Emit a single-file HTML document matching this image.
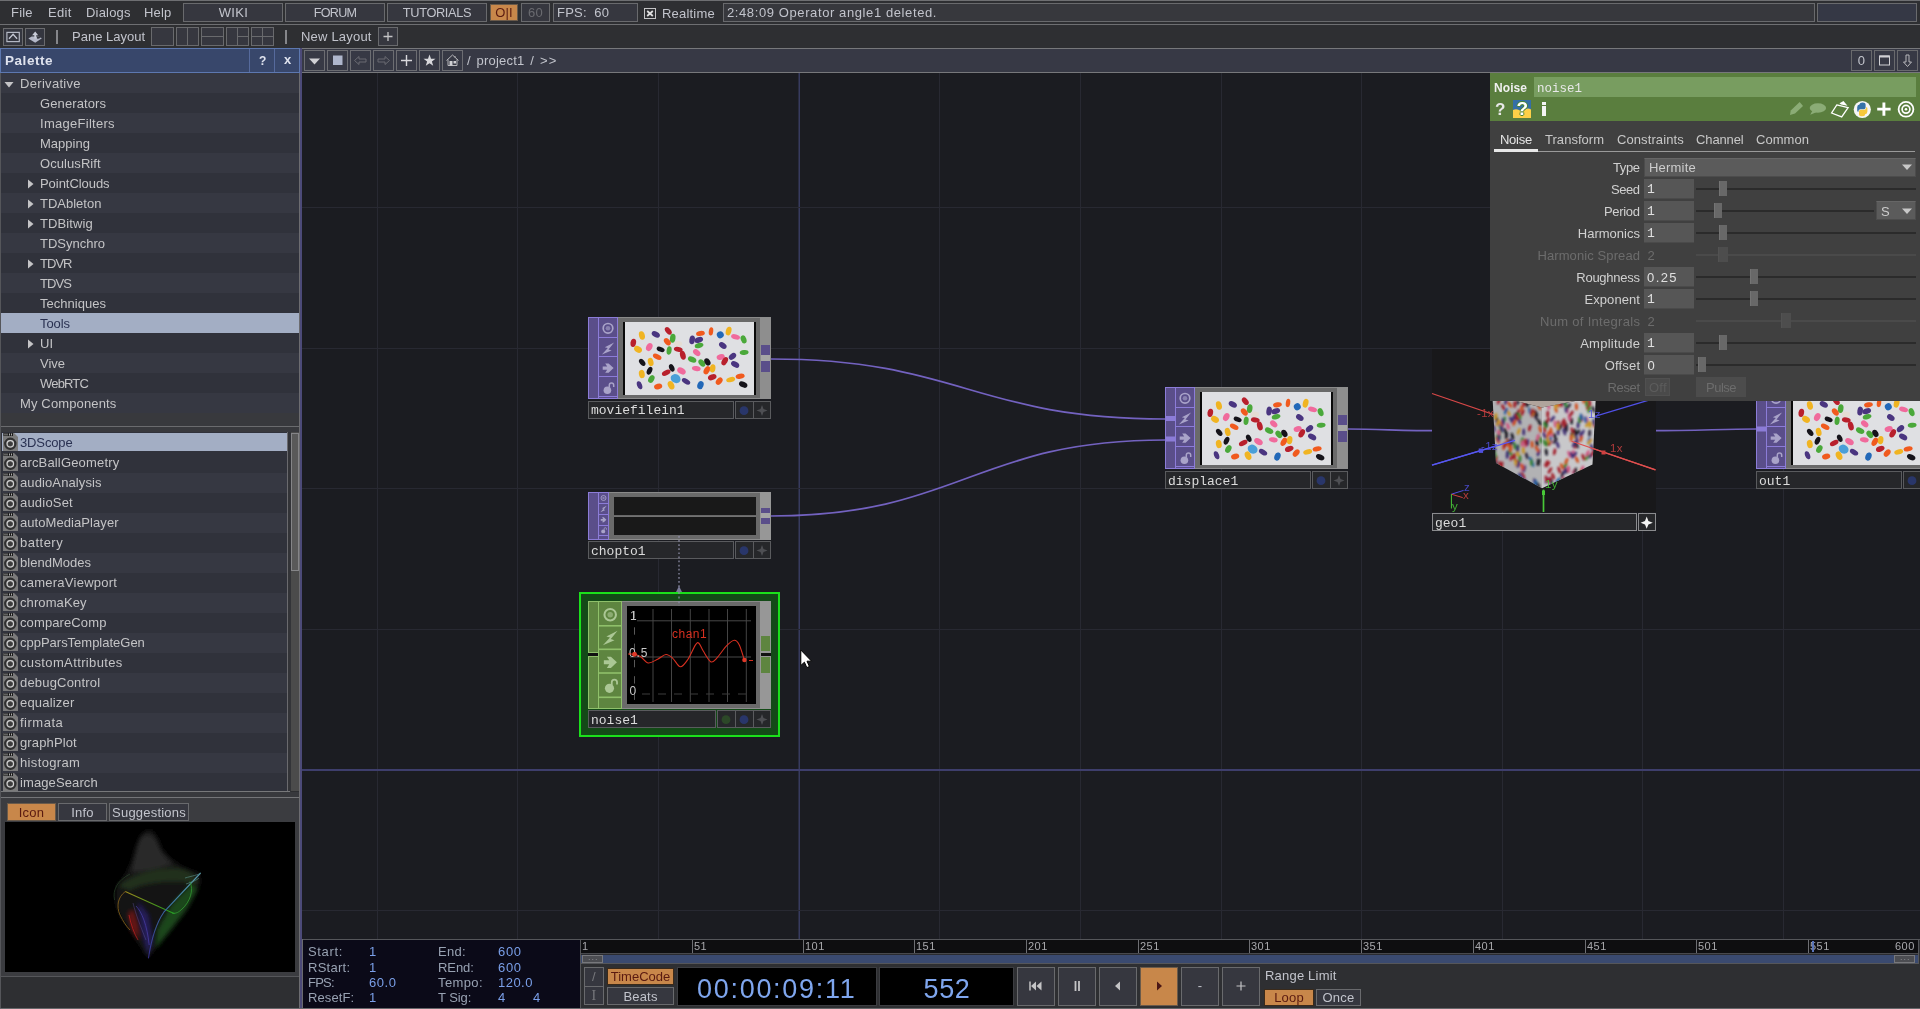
<!DOCTYPE html>
<html><head><meta charset="utf-8"><title>TouchDesigner</title>
<style>
*{box-sizing:border-box;margin:0;padding:0}
html,body{width:1920px;height:1009px;overflow:hidden;background:#2e2f32}
body{position:relative;font-family:"Liberation Sans",sans-serif;font-size:13px;letter-spacing:.2px;color:#c2c4cc;line-height:1}
.a{position:absolute}
.t{position:absolute;white-space:nowrap;line-height:16px;height:16px}
.mono{font-family:"Liberation Mono",monospace;letter-spacing:0}
.btn{position:absolute;background:#36373f;border:1px solid #696a6d;text-align:center;white-space:nowrap}
.org{background:#c8874a;color:#4a1616;border-color:#6a5a4a}
svg{position:absolute;overflow:visible}
#root{position:absolute;left:0;top:0;width:1920px;height:1009px;will-change:transform;overflow:hidden}
</style></head><body><div id="root">
<!-- ===== top menu row ===== -->
<div class="a" style="left:0;top:0;width:1920px;height:1px;background:#6e6f72"></div>
<div class="a" style="left:0;top:1px;width:1920px;height:23px;background:#2e2f32"></div>
<div class="a" style="left:0;top:24px;width:1920px;height:1px;background:#6e6f72"></div>
<div class="a" style="left:0;top:25px;width:1920px;height:23px;background:#2e2f32"></div>
<div class="t" style="left:11px;top:5px">File</div>
<div class="t" style="left:48px;top:5px;letter-spacing:.3px">Edit</div>
<div class="t" style="left:86px;top:5px">Dialogs</div>
<div class="t" style="left:144px;top:5px">Help</div>
<div class="btn" style="left:183px;top:3px;width:100px;height:19px;line-height:17px;letter-spacing:.38px;padding-left:1px">WIKI</div>
<div class="btn" style="left:285px;top:3px;width:100px;height:19px;line-height:18.5px;font-size:12.6px;letter-spacing:-0.72px">FORUM</div>
<div class="btn" style="left:387px;top:3px;width:100px;height:19px;line-height:17.5px;font-size:12.8px;letter-spacing:-0.36px">TUTORIALS</div>
<div class="btn org" style="left:490px;top:4px;width:28px;height:17px;line-height:15px;color:#5a1a10">O|I</div>
<div class="btn" style="left:521px;top:3px;width:29px;height:19px;line-height:17px;color:#6a6b70">60</div>
<div class="btn" style="left:553px;top:3px;width:85px;height:19px;line-height:17px;text-align:left;padding-left:3px">FPS:&nbsp; 60</div>
<div class="a" style="left:644px;top:8px;width:12px;height:11px;border:1px solid #c4c4c6;background:#2e2f32"></div>
<svg style="left:644px;top:8px" width="12" height="11"><path d="M3.2 3 L8.8 8 M8.8 3 L3.2 8" stroke="#e0e0e0" stroke-width="1.7"/></svg>
<div class="t" style="left:662px;top:6px">Realtime</div>
<div class="btn" style="left:723px;top:3px;width:1092px;height:19px;line-height:17px;text-align:left;padding-left:3px;background:#37383d"><span style="letter-spacing:.6px">2:48:09 Operator angle1 deleted.</span></div>
<div class="btn" style="left:1817px;top:3px;width:100px;height:19px;background:#353845"></div>
<!-- ===== second row ===== -->
<div class="btn" style="left:3px;top:28px;width:20px;height:18px;background:#34363f"></div>
<svg style="left:3px;top:28px" width="20" height="18"><rect x="3.9" y="4.4" width="12.4" height="9.2" fill="none" stroke="#b4b8c4" stroke-width="1.2"/><path d="M6 10.8 L10.1 6.3 L14.1 10.7" fill="none" stroke="#c4c8d4" stroke-width="1.3"/></svg>
<div class="btn" style="left:25px;top:28px;width:20px;height:18px;background:#34363f"></div>
<svg style="left:25px;top:28px" width="20" height="18"><path d="M3.3 10.4 L6.7 8.6 H13.7 L16.9 10.2 L10.2 14.8 Z" fill="#b4b8c8"/><path d="M11.5 8.6 H13.7 L16 9.8 L12.5 11 Z" fill="#34363f"/><path d="M10.2 3.6 L13.2 7.3 L11.2 7.3 L11.2 10.4 L9.3 10.4 L9.3 7.3 L7.1 7.3 Z" fill="#c8ccd8"/></svg>
<div class="a" style="left:56px;top:30px;width:2px;height:14px;background:#85868a"></div>
<div class="t" style="left:72px;top:29px;letter-spacing:0">Pane Layout</div>
<div class="btn" style="left:151px;top:27px;width:23px;height:19px"></div>
<div class="btn" style="left:176px;top:27px;width:23px;height:19px"></div><div class="a" style="left:187px;top:28px;width:1px;height:17px;background:#696a6d"></div>
<div class="btn" style="left:201px;top:27px;width:23px;height:19px"></div><div class="a" style="left:202px;top:36px;width:21px;height:1px;background:#696a6d"></div>
<div class="btn" style="left:226px;top:27px;width:23px;height:19px"></div><div class="a" style="left:237px;top:28px;width:1px;height:17px;background:#696a6d"></div><div class="a" style="left:238px;top:36px;width:10px;height:1px;background:#696a6d"></div>
<div class="btn" style="left:251px;top:27px;width:23px;height:19px"></div><div class="a" style="left:262px;top:28px;width:1px;height:17px;background:#696a6d"></div><div class="a" style="left:252px;top:36px;width:21px;height:1px;background:#696a6d"></div>
<div class="a" style="left:285px;top:30px;width:2px;height:14px;background:#85868a"></div>
<div class="t" style="left:301px;top:29px">New Layout</div>
<div class="btn" style="left:378px;top:27px;width:20px;height:19px"></div>
<svg style="left:378px;top:27px" width="20" height="19"><path d="M10 5 V14 M5.5 9.5 H14.5" stroke="#c4c4c6" stroke-width="1.3"/></svg>
<!-- ===== Palette panel ===== -->
<div class="a" style="left:0;top:48px;width:300px;height:25px;background:#38476b;border:1px solid #5d78b0"></div>
<div class="a" style="left:249px;top:49px;width:1px;height:23px;background:#566a9c"></div>
<div class="a" style="left:274px;top:49px;width:1px;height:23px;background:#566a9c"></div>
<div class="t" style="left:5px;top:53px;font-size:13.5px;color:#dfe3ee;font-weight:bold;letter-spacing:0.54px">Palette</div>
<div class="t" style="left:259px;top:53px;font-weight:bold;color:#dfe3ee;font-size:12px">?</div>
<div class="t" style="left:284px;top:52px;font-weight:bold;color:#dfe3ee;font-size:13px">x</div>
<div class="a" style="left:0;top:73px;width:300px;height:936px;background:#2e2f32"></div>
<div class="a" style="left:0;top:73px;width:1px;height:936px;background:#55565a"></div>
<div class="a" style="left:1px;top:73px;width:298px;height:20px;background:#363842"></div>
<div class="t" style="left:20px;top:76px;color:#c4c4c6;letter-spacing:0.31px">Derivative</div>
<svg style="left:4px;top:81px" width="10" height="7"><path d="M0.5 1 L9.5 1 L5 6.5 Z" fill="#c4c4c6"/></svg>
<div class="a" style="left:1px;top:93px;width:298px;height:20px;background:#30323b"></div>
<div class="t" style="left:40px;top:96px;color:#c4c4c6;letter-spacing:0.11px">Generators</div>
<div class="a" style="left:1px;top:113px;width:298px;height:20px;background:#363842"></div>
<div class="t" style="left:40px;top:116px;color:#c4c4c6;letter-spacing:0.28px">ImageFilters</div>
<div class="a" style="left:1px;top:133px;width:298px;height:20px;background:#30323b"></div>
<div class="t" style="left:40px;top:136px;color:#c4c4c6;letter-spacing:0.02px">Mapping</div>
<div class="a" style="left:1px;top:153px;width:298px;height:20px;background:#363842"></div>
<div class="t" style="left:40px;top:156px;color:#c4c4c6;letter-spacing:0.07px">OculusRift</div>
<div class="a" style="left:1px;top:173px;width:298px;height:20px;background:#30323b"></div>
<div class="t" style="left:40px;top:176px;color:#c4c4c6;letter-spacing:-0.05px">PointClouds</div>
<svg style="left:27px;top:179px" width="7" height="10"><path d="M1 0.5 L6.5 5 L1 9.5 Z" fill="#c4c4c6"/></svg>
<div class="a" style="left:1px;top:193px;width:298px;height:20px;background:#363842"></div>
<div class="t" style="left:40px;top:196px;color:#c4c4c6;letter-spacing:-0.0px">TDAbleton</div>
<svg style="left:27px;top:199px" width="7" height="10"><path d="M1 0.5 L6.5 5 L1 9.5 Z" fill="#c4c4c6"/></svg>
<div class="a" style="left:1px;top:213px;width:298px;height:20px;background:#30323b"></div>
<div class="t" style="left:40px;top:216px;color:#c4c4c6;letter-spacing:0.11px">TDBitwig</div>
<svg style="left:27px;top:219px" width="7" height="10"><path d="M1 0.5 L6.5 5 L1 9.5 Z" fill="#c4c4c6"/></svg>
<div class="a" style="left:1px;top:233px;width:298px;height:20px;background:#363842"></div>
<div class="t" style="left:40px;top:236px;color:#c4c4c6;letter-spacing:-0.0px">TDSynchro</div>
<div class="a" style="left:1px;top:253px;width:298px;height:20px;background:#30323b"></div>
<div class="t" style="left:40px;top:256px;color:#c4c4c6;letter-spacing:-0.96px">TDVR</div>
<svg style="left:27px;top:259px" width="7" height="10"><path d="M1 0.5 L6.5 5 L1 9.5 Z" fill="#c4c4c6"/></svg>
<div class="a" style="left:1px;top:273px;width:298px;height:20px;background:#363842"></div>
<div class="t" style="left:40px;top:276px;color:#c4c4c6;letter-spacing:-0.89px">TDVS</div>
<div class="a" style="left:1px;top:293px;width:298px;height:20px;background:#30323b"></div>
<div class="t" style="left:40px;top:296px;color:#c4c4c6;letter-spacing:0.03px">Techniques</div>
<div class="a" style="left:1px;top:313px;width:298px;height:20px;background:#a3aec4"></div>
<div class="t" style="left:40px;top:316px;color:#2a3252;letter-spacing:-0.09px">Tools</div>
<div class="a" style="left:1px;top:333px;width:298px;height:20px;background:#30323b"></div>
<div class="t" style="left:40px;top:336px;color:#c4c4c6;letter-spacing:0.2px">UI</div>
<svg style="left:27px;top:339px" width="7" height="10"><path d="M1 0.5 L6.5 5 L1 9.5 Z" fill="#c4c4c6"/></svg>
<div class="a" style="left:1px;top:353px;width:298px;height:20px;background:#363842"></div>
<div class="t" style="left:40px;top:356px;color:#c4c4c6;letter-spacing:-0.02px">Vive</div>
<div class="a" style="left:1px;top:373px;width:298px;height:20px;background:#30323b"></div>
<div class="t" style="left:40px;top:376px;color:#c4c4c6;letter-spacing:-0.82px">WebRTC</div>
<div class="a" style="left:1px;top:393px;width:298px;height:20px;background:#363842"></div>
<div class="t" style="left:20px;top:396px;color:#c4c4c6;letter-spacing:0.14px">My Components</div>
<div class="a" style="left:1px;top:413px;width:298px;height:19px;background:#38393d"></div>
<div class="a" style="left:1px;top:426px;width:298px;height:1px;background:#6a6b6e"></div>
<svg width="0" height="0"><defs><g id="tox"><path d="M0 0 H11 L15 4 V18 H0 Z" fill="#7b7b7b"/><rect x="0.5" y="0" width="9.5" height="3" fill="#1c1c1c"/><path d="M2 0.5v2M4 0.5v2M6.5 0.5v2M8.5 0.5v2" stroke="#aaa" stroke-width="1"/><circle cx="7.3" cy="10.8" r="5.1" fill="none" stroke="#303030" stroke-width="2.2"/><circle cx="7.3" cy="10.8" r="3.2" fill="#4a4a4a" stroke="#d4d4d4" stroke-width="1.1"/><path d="M7.3 8.6 L9.5 10.8 L7.3 13 L5.1 10.8Z" fill="#3a3a3a"/></g></defs></svg>
<div class="a" style="left:1px;top:432px;width:287px;height:360px;background:#30323b"></div>
<div class="a" style="left:2px;top:433px;width:286px;height:18px;background:#a3aec4"></div>
<svg style="left:3px;top:433px" width="15" height="18"><use href="#tox"/></svg>
<div class="t" style="left:20px;top:435px;color:#2a3252;letter-spacing:-0.13px">3DScope</div>
<div class="a" style="left:2px;top:453px;width:286px;height:20px;background:#30323b"></div>
<svg style="left:3px;top:453px" width="15" height="18"><use href="#tox"/></svg>
<div class="t" style="left:20px;top:455px;color:#c4c4c6;letter-spacing:0.17px">arcBallGeometry</div>
<div class="a" style="left:2px;top:473px;width:286px;height:20px;background:#363842"></div>
<svg style="left:3px;top:473px" width="15" height="18"><use href="#tox"/></svg>
<div class="t" style="left:20px;top:475px;color:#c4c4c6;letter-spacing:0.11px">audioAnalysis</div>
<div class="a" style="left:2px;top:493px;width:286px;height:20px;background:#30323b"></div>
<svg style="left:3px;top:493px" width="15" height="18"><use href="#tox"/></svg>
<div class="t" style="left:20px;top:495px;color:#c4c4c6;letter-spacing:0.2px">audioSet</div>
<div class="a" style="left:2px;top:513px;width:286px;height:20px;background:#363842"></div>
<svg style="left:3px;top:513px" width="15" height="18"><use href="#tox"/></svg>
<div class="t" style="left:20px;top:515px;color:#c4c4c6;letter-spacing:0.07px">autoMediaPlayer</div>
<div class="a" style="left:2px;top:533px;width:286px;height:20px;background:#30323b"></div>
<svg style="left:3px;top:533px" width="15" height="18"><use href="#tox"/></svg>
<div class="t" style="left:20px;top:535px;color:#c4c4c6;letter-spacing:0.49px">battery</div>
<div class="a" style="left:2px;top:553px;width:286px;height:20px;background:#363842"></div>
<svg style="left:3px;top:553px" width="15" height="18"><use href="#tox"/></svg>
<div class="t" style="left:20px;top:555px;color:#c4c4c6;letter-spacing:0.02px">blendModes</div>
<div class="a" style="left:2px;top:573px;width:286px;height:20px;background:#30323b"></div>
<svg style="left:3px;top:573px" width="15" height="18"><use href="#tox"/></svg>
<div class="t" style="left:20px;top:575px;color:#c4c4c6;letter-spacing:0.25px">cameraViewport</div>
<div class="a" style="left:2px;top:593px;width:286px;height:20px;background:#363842"></div>
<svg style="left:3px;top:593px" width="15" height="18"><use href="#tox"/></svg>
<div class="t" style="left:20px;top:595px;color:#c4c4c6;letter-spacing:0.09px">chromaKey</div>
<div class="a" style="left:2px;top:613px;width:286px;height:20px;background:#30323b"></div>
<svg style="left:3px;top:613px" width="15" height="18"><use href="#tox"/></svg>
<div class="t" style="left:20px;top:615px;color:#c4c4c6;letter-spacing:0.11px">compareComp</div>
<div class="a" style="left:2px;top:633px;width:286px;height:20px;background:#363842"></div>
<svg style="left:3px;top:633px" width="15" height="18"><use href="#tox"/></svg>
<div class="t" style="left:20px;top:635px;color:#c4c4c6;letter-spacing:-0.01px">cppParsTemplateGen</div>
<div class="a" style="left:2px;top:653px;width:286px;height:20px;background:#30323b"></div>
<svg style="left:3px;top:653px" width="15" height="18"><use href="#tox"/></svg>
<div class="t" style="left:20px;top:655px;color:#c4c4c6;letter-spacing:0.37px">customAttributes</div>
<div class="a" style="left:2px;top:673px;width:286px;height:20px;background:#363842"></div>
<svg style="left:3px;top:673px" width="15" height="18"><use href="#tox"/></svg>
<div class="t" style="left:20px;top:675px;color:#c4c4c6;letter-spacing:0.19px">debugControl</div>
<div class="a" style="left:2px;top:693px;width:286px;height:20px;background:#30323b"></div>
<svg style="left:3px;top:693px" width="15" height="18"><use href="#tox"/></svg>
<div class="t" style="left:20px;top:695px;color:#c4c4c6;letter-spacing:0.19px">equalizer</div>
<div class="a" style="left:2px;top:713px;width:286px;height:20px;background:#363842"></div>
<svg style="left:3px;top:713px" width="15" height="18"><use href="#tox"/></svg>
<div class="t" style="left:20px;top:715px;color:#c4c4c6;letter-spacing:0.51px">firmata</div>
<div class="a" style="left:2px;top:733px;width:286px;height:20px;background:#30323b"></div>
<svg style="left:3px;top:733px" width="15" height="18"><use href="#tox"/></svg>
<div class="t" style="left:20px;top:735px;color:#c4c4c6;letter-spacing:0.13px">graphPlot</div>
<div class="a" style="left:2px;top:753px;width:286px;height:20px;background:#363842"></div>
<svg style="left:3px;top:753px" width="15" height="18"><use href="#tox"/></svg>
<div class="t" style="left:20px;top:755px;color:#c4c4c6;letter-spacing:0.35px">histogram</div>
<div class="a" style="left:2px;top:773px;width:286px;height:20px;background:#30323b"></div>
<svg style="left:3px;top:773px" width="15" height="18"><use href="#tox"/></svg>
<div class="t" style="left:20px;top:775px;color:#c4c4c6;letter-spacing:0.11px">imageSearch</div>
<div class="a" style="left:287px;top:432px;width:1px;height:360px;background:#6a6a6e"></div><div class="a" style="left:288px;top:432px;width:3px;height:360px;background:#333438"></div>
<div class="a" style="left:1px;top:791px;width:289px;height:1px;background:#77787a"></div>
<div class="a" style="left:291px;top:432px;width:8px;height:359px;background:#4b4b4b"></div>
<div class="a" style="left:291px;top:433px;width:8px;height:138px;background:#595959;border:1px solid #858588"></div>
<div class="a" style="left:1px;top:792px;width:298px;height:5px;background:#38393d"></div>
<div class="a" style="left:1px;top:797px;width:298px;height:1px;background:#747578"></div>
<div class="a" style="left:1px;top:798px;width:298px;height:178px;background:#3b3c40"></div>
<div class="btn org" style="left:7px;top:803px;width:49px;height:18px;line-height:18px;color:#5a1a10">Icon</div>
<div class="btn" style="left:58px;top:803px;width:49px;height:18px;line-height:18px">Info</div>
<div class="btn" style="left:109px;top:803px;width:80px;height:18px;line-height:18px">Suggestions</div>
<div class="a" style="left:5px;top:822px;width:290px;height:150px;background:#000"></div>
<svg style="left:5px;top:822px" width="290" height="150" viewBox="5 822 290 150"><defs><filter id="ib1" x="-30%" y="-30%" width="160%" height="160%"><feGaussianBlur stdDeviation="2.2"/></filter><filter id="ib2" x="-30%" y="-30%" width="160%" height="160%"><feGaussianBlur stdDeviation="0.6"/></filter><linearGradient id="yg" x1="125" y1="891" x2="175" y2="914" gradientUnits="userSpaceOnUse"><stop offset="0" stop-color="#d0b020"/><stop offset=".5" stop-color="#70c020"/><stop offset="1" stop-color="#20c020"/></linearGradient><linearGradient id="cb" x1="200" y1="873" x2="148" y2="958" gradientUnits="userSpaceOnUse"><stop offset="0" stop-color="#70c8e0"/><stop offset=".45" stop-color="#4888d0"/><stop offset="1" stop-color="#4038a8"/></linearGradient></defs><g filter="url(#ib1)"><path d="M148.4 830 C141 831 138 842 134.6 851 C132 862 128 871 118 884 C112 895 115 905 121 918 L148 958 L170 932 L188 909 L200 885 L200 873 C185 868 175 865 162 849 C158 838 156 830 148.4 830Z" fill="#1c1c1c" opacity=".8"/><path d="M140 838 C146 832 153 834 157 842 C160 852 166 858 173 864 C160 868 145 872 131 872 C134 860 136 848 140 838Z" fill="#343434" opacity=".6"/><path d="M118 886 C135 872 160 868 176 868 C190 870 198 876 198 884 C180 880 150 880 130 890Z" fill="#2a3a22" opacity=".7"/><path d="M172 905 L192 884 L197 890 L184 912 L166 935 L156 948 L158 930Z" fill="#1c7a1c" opacity=".5"/><path d="M129 914 L132.5 910 L137 925 L139 939 L133 930Z" fill="#c01818" opacity=".55"/><path d="M138 902 L148 915 L152 940 L148 955 L142 930Z" fill="#28206a" opacity=".8"/></g><g filter="url(#ib2)" fill="none" stroke-width=".9" opacity=".75"><path d="M125.3 891.5 L174.5 913.7" stroke="url(#yg)" stroke-width="1.1"/><path d="M125.3 891.5 C118 897 116 906 120 915 C123 921 126 926 130 930" stroke="#c89020" opacity=".8"/><path d="M200.6 873 L163.8 912.2 C157 922 152 935 148.4 958.3" stroke="url(#cb)" stroke-width="1.1"/><path d="M136 906 C142 912 147 925 149.2 945" stroke="#5048b8" opacity=".9"/><path d="M133 903 C136 915 140 925 146 940" stroke="#7060c0" opacity=".5"/><path d="M189.9 881.5 C194 890 190 902 182 909 C179 912 176 914 172 913" stroke="#38b838" opacity=".9"/><path d="M185 878 C192 876 198 875 200.6 873 M186 884 C192 882 197 880 199 878" stroke="#6ab0b0" opacity=".7"/><path d="M129 915 C131 925 134 933 138 940" stroke="#e02020" opacity=".9"/><path d="M114.6 900 C112 890 118 880 130 874" stroke="#305030" opacity=".8"/></g></svg>
<div class="a" style="left:1px;top:976px;width:298px;height:1px;background:#55565a"></div>
<div class="a" style="left:299px;top:73px;width:1px;height:936px;background:#6c6c70"></div>
<div class="a" style="left:300px;top:48px;width:2px;height:961px;background:#4c4a78"></div>
<!-- ===== network pane header ===== -->
<div class="a" style="left:302px;top:48px;width:1618px;height:25px;background:#373945;border-top:1px solid #77787b;border-bottom:1px solid #77787b"></div>
<div class="btn" style="left:304px;top:50px;width:21px;height:21px;background:#373945;border-color:#6c6d72"></div>
<div class="btn" style="left:327px;top:50px;width:21px;height:21px;background:#373945;border-color:#6c6d72"></div>
<div class="btn" style="left:350px;top:50px;width:21px;height:21px;background:#373945;border-color:#6c6d72"></div>
<div class="btn" style="left:373px;top:50px;width:21px;height:21px;background:#373945;border-color:#6c6d72"></div>
<div class="btn" style="left:396px;top:50px;width:21px;height:21px;background:#373945;border-color:#6c6d72"></div>
<div class="btn" style="left:419px;top:50px;width:21px;height:21px;background:#373945;border-color:#6c6d72"></div>
<div class="btn" style="left:442px;top:50px;width:21px;height:21px;background:#373945;border-color:#6c6d72"></div>
<svg style="left:304px;top:50px" width="21" height="21"><path d="M5 8.5 H16 L10.5 14.5 Z" fill="#d0d0d4"/></svg>
<svg style="left:327px;top:50px" width="21" height="21"><rect x="6" y="5.5" width="9.5" height="9.5" fill="#aeb6cc"/></svg>
<svg style="left:350px;top:50px" width="21" height="21"><path d="M4.5 10.5 L9 6.5 V9 H16 V12 H9 V14.5 Z" fill="none" stroke="#6a6b72" stroke-width="1"/></svg>
<svg style="left:373px;top:50px" width="21" height="21"><path d="M16.5 10.5 L12 6.5 V9 H5 V12 H12 V14.5 Z" fill="none" stroke="#6a6b72" stroke-width="1"/></svg>
<svg style="left:396px;top:50px" width="21" height="21"><path d="M10.5 5 V16 M5 10.5 H16" stroke="#d8d8dc" stroke-width="1.4"/></svg>
<svg style="left:419px;top:50px" width="21" height="21"><path d="M10.5 4.5 L12 8.8 L16.5 8.8 L12.9 11.5 L14.2 15.8 L10.5 13.2 L6.8 15.8 L8.1 11.5 L4.5 8.8 L9 8.8 Z" fill="#d8d8dc"/></svg>
<svg style="left:442px;top:50px" width="21" height="21"><path d="M4.5 10.5 L10.5 5 L16.5 10.5 M6 9.5 V15.5 H15 V9.5 M13 6 V7.5" fill="none" stroke="#b8b8bc" stroke-width="1"/><rect x="7.5" y="11" width="3" height="4.5" fill="#d0d0d4"/><rect x="11.5" y="11" width="2.5" height="2.5" fill="#d0d0d4"/></svg>
<div class="t" style="left:467px;top:53px;letter-spacing:.2px;word-spacing:2px">/ project1 / <span style="letter-spacing:1.3px">&gt;&gt;</span></div>
<div class="btn" style="left:1851px;top:50px;width:21px;height:21px;background:#373945;line-height:20px;font-size:13px">0</div>
<div class="btn" style="left:1874px;top:50px;width:21px;height:21px;background:#373945"></div>
<svg style="left:1874px;top:50px" width="21" height="21"><rect x="5.5" y="6" width="10" height="9" fill="none" stroke="#d0d0d4" stroke-width="1"/><path d="M5.5 6.5 H15.5" stroke="#d0d0d4" stroke-width="2"/></svg>
<div class="btn" style="left:1897px;top:50px;width:21px;height:21px;background:#373945"></div>
<svg style="left:1897px;top:50px" width="21" height="21"><path d="M10.5 16.5 L6.5 12 H9 V5 H12 V12 H14.5 Z" fill="none" stroke="#b8b8bc" stroke-width="1"/></svg>
<!-- ===== network background ===== -->
<div class="a" style="left:302px;top:73px;width:1618px;height:866px;background:#1b1c21"></div>
<div class="a" style="left:377px;top:73px;width:1px;height:866px;background:#282932"></div>
<div class="a" style="left:517px;top:73px;width:1px;height:866px;background:#282932"></div>
<div class="a" style="left:658px;top:73px;width:1px;height:866px;background:#282932"></div>
<div class="a" style="left:939px;top:73px;width:1px;height:866px;background:#282932"></div>
<div class="a" style="left:1080px;top:73px;width:1px;height:866px;background:#282932"></div>
<div class="a" style="left:1221px;top:73px;width:1px;height:866px;background:#282932"></div>
<div class="a" style="left:1361px;top:73px;width:1px;height:866px;background:#282932"></div>
<div class="a" style="left:1502px;top:73px;width:1px;height:866px;background:#282932"></div>
<div class="a" style="left:1642px;top:73px;width:1px;height:866px;background:#282932"></div>
<div class="a" style="left:1783px;top:73px;width:1px;height:866px;background:#282932"></div>
<div class="a" style="left:798px;top:73px;width:1px;height:866px;background:#292b40"></div><div class="a" style="left:799px;top:73px;width:1px;height:866px;background:#373b5e"></div>
<div class="a" style="left:302px;top:207px;width:1618px;height:1px;background:#282932"></div>
<div class="a" style="left:302px;top:348px;width:1618px;height:1px;background:#282932"></div>
<div class="a" style="left:302px;top:488px;width:1618px;height:1px;background:#282932"></div>
<div class="a" style="left:302px;top:629px;width:1618px;height:1px;background:#282932"></div>
<div class="a" style="left:302px;top:910px;width:1618px;height:1px;background:#282932"></div>
<div class="a" style="left:302px;top:769px;width:1618px;height:2px;background:#3e3e6c"></div>
<!--NODES-->
<svg width="0" height="0"><defs><symbol id="beans" viewBox="0 0 930 525" preserveAspectRatio="none"><rect width="930" height="525" fill="#dfe0e3"/><ellipse cx="60" cy="150" rx="20" ry="30" fill="#b8202c" transform="rotate(10 60 150)"/><ellipse cx="122" cy="97" rx="21" ry="31" fill="#f0b422" transform="rotate(-15 122 97)"/><ellipse cx="222" cy="89" rx="32" ry="20" fill="#4a3580" transform="rotate(30 222 89)"/><ellipse cx="312" cy="64" rx="31" ry="19" fill="#b8202c" transform="rotate(50 312 64)"/><ellipse cx="344" cy="117" rx="20" ry="32" fill="#4aa83a" transform="rotate(8 344 117)"/><ellipse cx="305" cy="142" rx="30" ry="20" fill="#f05a1e" transform="rotate(50 305 142)"/><ellipse cx="94" cy="197" rx="30" ry="22" fill="#f0b422" transform="rotate(30 94 197)"/><ellipse cx="175" cy="180" rx="22" ry="30" fill="#f06a9c" transform="rotate(25 175 180)"/><ellipse cx="257" cy="197" rx="30" ry="17" fill="#15131a" transform="rotate(20 257 197)"/><ellipse cx="318" cy="205" rx="18" ry="30" fill="#4aa83a" transform="rotate(8 318 205)"/><ellipse cx="382" cy="157" rx="30" ry="20" fill="#e4ddd4" transform="rotate(0 382 157)"/><ellipse cx="384" cy="197" rx="32" ry="18" fill="#b8202c" transform="rotate(10 384 197)"/><ellipse cx="417" cy="239" rx="20" ry="33" fill="#b8202c" transform="rotate(-15 417 239)"/><ellipse cx="232" cy="250" rx="33" ry="18" fill="#f05a1e" transform="rotate(25 232 250)"/><ellipse cx="124" cy="290" rx="29" ry="18" fill="#15131a" transform="rotate(50 124 290)"/><ellipse cx="185" cy="287" rx="20" ry="30" fill="#f0b422" transform="rotate(-15 185 287)"/><ellipse cx="177" cy="350" rx="18" ry="30" fill="#15131a" transform="rotate(25 177 350)"/><ellipse cx="121" cy="374" rx="21" ry="30" fill="#f0b422" transform="rotate(-10 121 374)"/><ellipse cx="190" cy="410" rx="20" ry="30" fill="#4aa83a" transform="rotate(30 190 410)"/><ellipse cx="105" cy="455" rx="18" ry="30" fill="#4a3580" transform="rotate(-20 105 455)"/><ellipse cx="239" cy="464" rx="30" ry="20" fill="#f05a1e" transform="rotate(-15 239 464)"/><ellipse cx="297" cy="365" rx="33" ry="18" fill="#b8202c" transform="rotate(-25 297 365)"/><ellipse cx="337" cy="330" rx="18" ry="28" fill="#15131a" transform="rotate(-25 337 330)"/><ellipse cx="407" cy="352" rx="33" ry="22" fill="#f06a9c" transform="rotate(30 407 352)"/><ellipse cx="365" cy="407" rx="37" ry="31" fill="#4a9fd8" transform="rotate(30 365 407)"/><ellipse cx="332" cy="455" rx="22" ry="32" fill="#f0b422" transform="rotate(-25 332 455)"/><ellipse cx="440" cy="427" rx="33" ry="18" fill="#4a3580" transform="rotate(30 440 427)"/><ellipse cx="544" cy="454" rx="22" ry="30" fill="#2268b8" transform="rotate(20 544 454)"/><ellipse cx="484" cy="129" rx="20" ry="32" fill="#4a3580" transform="rotate(8 484 129)"/><ellipse cx="532" cy="129" rx="32" ry="20" fill="#4a3580" transform="rotate(-20 532 129)"/><ellipse cx="544" cy="82" rx="32" ry="18" fill="#f05a1e" transform="rotate(-10 544 82)"/><ellipse cx="620" cy="67" rx="16" ry="30" fill="#f05a1e" transform="rotate(8 620 67)"/><ellipse cx="534" cy="169" rx="32" ry="18" fill="#4aa83a" transform="rotate(-15 534 169)"/><ellipse cx="517" cy="220" rx="30" ry="20" fill="#f06a9c" transform="rotate(40 517 220)"/><ellipse cx="484" cy="270" rx="32" ry="20" fill="#4aa83a" transform="rotate(25 484 270)"/><ellipse cx="554" cy="295" rx="30" ry="20" fill="#4aa83a" transform="rotate(50 554 295)"/><ellipse cx="594" cy="287" rx="20" ry="28" fill="#15131a" transform="rotate(-30 594 287)"/><ellipse cx="514" cy="335" rx="32" ry="18" fill="#f06a9c" transform="rotate(10 514 335)"/><ellipse cx="590" cy="347" rx="20" ry="32" fill="#f05a1e" transform="rotate(30 590 347)"/><ellipse cx="632" cy="334" rx="20" ry="30" fill="#f0b422" transform="rotate(8 632 334)"/><ellipse cx="629" cy="397" rx="32" ry="20" fill="#b8202c" transform="rotate(-20 629 397)"/><ellipse cx="679" cy="425" rx="20" ry="30" fill="#f05a1e" transform="rotate(40 679 425)"/><ellipse cx="762" cy="414" rx="33" ry="18" fill="#f0b422" transform="rotate(-15 762 414)"/><ellipse cx="830" cy="390" rx="33" ry="18" fill="#f05a1e" transform="rotate(-10 830 390)"/><ellipse cx="852" cy="450" rx="32" ry="20" fill="#15131a" transform="rotate(25 852 450)"/><ellipse cx="687" cy="92" rx="25" ry="25" fill="#2268b8" transform="rotate(-30 687 92)"/><ellipse cx="747" cy="65" rx="20" ry="32" fill="#f0b422" transform="rotate(15 747 65)"/><ellipse cx="797" cy="107" rx="33" ry="18" fill="#f06a9c" transform="rotate(15 797 107)"/><ellipse cx="855" cy="125" rx="20" ry="30" fill="#4aa83a" transform="rotate(-20 855 125)"/><ellipse cx="705" cy="169" rx="30" ry="20" fill="#4a3580" transform="rotate(35 705 169)"/><ellipse cx="859" cy="219" rx="32" ry="18" fill="#4aa83a" transform="rotate(-5 859 219)"/><ellipse cx="690" cy="252" rx="30" ry="20" fill="#f06a9c" transform="rotate(-15 690 252)"/><ellipse cx="719" cy="282" rx="20" ry="32" fill="#b8202c" transform="rotate(30 719 282)"/><ellipse cx="775" cy="247" rx="30" ry="20" fill="#4a3580" transform="rotate(-40 775 247)"/><ellipse cx="794" cy="305" rx="32" ry="20" fill="#4a3580" transform="rotate(30 794 305)"/></symbol><symbol id="beans2" viewBox="0 0 930 525" preserveAspectRatio="none"><rect width="930" height="525" fill="#dfe0e3"/><ellipse cx="60" cy="150" rx="20" ry="30" fill="#b8202c" transform="rotate(10 60 150)"/><ellipse cx="122" cy="97" rx="21" ry="31" fill="#f0b422" transform="rotate(-15 122 97)"/><ellipse cx="222" cy="89" rx="32" ry="20" fill="#4a3580" transform="rotate(30 222 89)"/><ellipse cx="312" cy="66" rx="31" ry="19" fill="#b8202c" transform="rotate(50 312 66)"/><ellipse cx="344" cy="120" rx="20" ry="32" fill="#4aa83a" transform="rotate(8 344 120)"/><ellipse cx="305" cy="144" rx="30" ry="20" fill="#f05a1e" transform="rotate(50 305 144)"/><ellipse cx="94" cy="197" rx="30" ry="22" fill="#f0b422" transform="rotate(30 94 197)"/><ellipse cx="175" cy="180" rx="22" ry="30" fill="#f06a9c" transform="rotate(25 175 180)"/><ellipse cx="257" cy="197" rx="30" ry="17" fill="#15131a" transform="rotate(20 257 197)"/><ellipse cx="318" cy="207" rx="18" ry="30" fill="#4aa83a" transform="rotate(8 318 207)"/><ellipse cx="382" cy="161" rx="30" ry="20" fill="#e4ddd4" transform="rotate(0 382 161)"/><ellipse cx="384" cy="201" rx="32" ry="18" fill="#b8202c" transform="rotate(10 384 201)"/><ellipse cx="417" cy="244" rx="20" ry="33" fill="#b8202c" transform="rotate(-15 417 244)"/><ellipse cx="232" cy="250" rx="33" ry="18" fill="#f05a1e" transform="rotate(25 232 250)"/><ellipse cx="124" cy="290" rx="29" ry="18" fill="#15131a" transform="rotate(50 124 290)"/><ellipse cx="185" cy="287" rx="20" ry="30" fill="#f0b422" transform="rotate(-15 185 287)"/><ellipse cx="177" cy="350" rx="18" ry="30" fill="#15131a" transform="rotate(25 177 350)"/><ellipse cx="121" cy="374" rx="21" ry="30" fill="#f0b422" transform="rotate(-10 121 374)"/><ellipse cx="190" cy="410" rx="20" ry="30" fill="#4aa83a" transform="rotate(30 190 410)"/><ellipse cx="105" cy="455" rx="18" ry="30" fill="#4a3580" transform="rotate(-20 105 455)"/><ellipse cx="239" cy="464" rx="30" ry="20" fill="#f05a1e" transform="rotate(-15 239 464)"/><ellipse cx="297" cy="367" rx="33" ry="18" fill="#b8202c" transform="rotate(-25 297 367)"/><ellipse cx="337" cy="333" rx="18" ry="28" fill="#15131a" transform="rotate(-25 337 333)"/><ellipse cx="407" cy="357" rx="33" ry="22" fill="#f06a9c" transform="rotate(30 407 357)"/><ellipse cx="365" cy="411" rx="37" ry="31" fill="#4a9fd8" transform="rotate(30 365 411)"/><ellipse cx="332" cy="458" rx="22" ry="32" fill="#f0b422" transform="rotate(-25 332 458)"/><ellipse cx="440" cy="433" rx="33" ry="18" fill="#4a3580" transform="rotate(30 440 433)"/><ellipse cx="544" cy="464" rx="22" ry="30" fill="#2268b8" transform="rotate(20 544 464)"/><ellipse cx="484" cy="137" rx="20" ry="32" fill="#4a3580" transform="rotate(8 484 137)"/><ellipse cx="532" cy="138" rx="32" ry="20" fill="#4a3580" transform="rotate(-20 532 138)"/><ellipse cx="544" cy="92" rx="32" ry="18" fill="#f05a1e" transform="rotate(-10 544 92)"/><ellipse cx="620" cy="79" rx="16" ry="30" fill="#f05a1e" transform="rotate(8 620 79)"/><ellipse cx="534" cy="178" rx="32" ry="18" fill="#4aa83a" transform="rotate(-15 534 178)"/><ellipse cx="517" cy="229" rx="30" ry="20" fill="#f06a9c" transform="rotate(40 517 229)"/><ellipse cx="484" cy="278" rx="32" ry="20" fill="#4aa83a" transform="rotate(25 484 278)"/><ellipse cx="554" cy="305" rx="30" ry="20" fill="#4aa83a" transform="rotate(50 554 305)"/><ellipse cx="594" cy="298" rx="20" ry="28" fill="#15131a" transform="rotate(-30 594 298)"/><ellipse cx="514" cy="344" rx="32" ry="18" fill="#f06a9c" transform="rotate(10 514 344)"/><ellipse cx="590" cy="358" rx="20" ry="32" fill="#f05a1e" transform="rotate(30 590 358)"/><ellipse cx="632" cy="346" rx="20" ry="30" fill="#f0b422" transform="rotate(8 632 346)"/><ellipse cx="629" cy="409" rx="32" ry="20" fill="#b8202c" transform="rotate(-20 629 409)"/><ellipse cx="679" cy="439" rx="20" ry="30" fill="#f05a1e" transform="rotate(40 679 439)"/><ellipse cx="762" cy="431" rx="33" ry="18" fill="#f0b422" transform="rotate(-15 762 431)"/><ellipse cx="830" cy="409" rx="33" ry="18" fill="#f05a1e" transform="rotate(-10 830 409)"/><ellipse cx="852" cy="469" rx="32" ry="20" fill="#15131a" transform="rotate(25 852 469)"/><ellipse cx="687" cy="106" rx="25" ry="25" fill="#2268b8" transform="rotate(-30 687 106)"/><ellipse cx="747" cy="81" rx="20" ry="32" fill="#f0b422" transform="rotate(15 747 81)"/><ellipse cx="797" cy="125" rx="33" ry="18" fill="#f06a9c" transform="rotate(15 797 125)"/><ellipse cx="855" cy="145" rx="20" ry="30" fill="#4aa83a" transform="rotate(-20 855 145)"/><ellipse cx="705" cy="184" rx="30" ry="20" fill="#4a3580" transform="rotate(35 705 184)"/><ellipse cx="859" cy="239" rx="32" ry="18" fill="#4aa83a" transform="rotate(-5 859 239)"/><ellipse cx="690" cy="266" rx="30" ry="20" fill="#f06a9c" transform="rotate(-15 690 266)"/><ellipse cx="719" cy="297" rx="20" ry="32" fill="#b8202c" transform="rotate(30 719 297)"/><ellipse cx="775" cy="264" rx="30" ry="20" fill="#4a3580" transform="rotate(-40 775 264)"/><ellipse cx="794" cy="323" rx="32" ry="20" fill="#4a3580" transform="rotate(30 794 323)"/></symbol></defs></svg>
<svg style="left:0;top:0" width="1920" height="1009" fill="none"><path d="M771 359 C 960 359, 975 419, 1165 419" stroke="#7362c0" stroke-width="1.7"/><path d="M771 516 C 960 516, 975 440, 1165 440" stroke="#7362c0" stroke-width="1.7"/><path d="M1348 429 C1380 429 1400 430.7 1440 430.7 L1650 430.7 C1700 430.7 1720 429 1756 429" stroke="#7362c0" stroke-width="1.7"/></svg>
<svg style="left:0;top:0" width="1920" height="1009"><rect x="588" y="317" width="183" height="82" fill="#6a6a6a"/><rect x="588" y="317" width="183" height="1" fill="#8a8a8a"/><rect x="588" y="398" width="183" height="1" fill="#8c8c8c"/><rect x="760" y="317" width="11" height="82" fill="#8e8e8e"/><rect x="588" y="317" width="30" height="82" fill="#5a4e8a"/><rect x="588.5" y="317.5" width="29" height="81" fill="none" stroke="#8c7cd8" stroke-width="1"/><rect x="598" y="317" width="1" height="82" fill="#8c7cd8"/><rect x="598" y="337" width="20" height="1" fill="#8c7cd8"/><rect x="598" y="356" width="20" height="1" fill="#8c7cd8"/><rect x="598" y="376" width="20" height="1" fill="#8c7cd8"/><rect x="598" y="396" width="20" height="1" fill="#8c7cd8"/><circle cx="608" cy="328.3" r="4.80" fill="none" stroke="#a9a3c9" stroke-width="1.70"/><circle cx="608" cy="328.3" r="2.30" fill="#a9a3c9" opacity=".6"/><path d="M614.10 342.40 L604.80 347.20 L607.80 348.10 L601.90 354.60 L611.60 350.40 L608.50 349.40 Z" fill="#a9a3c9"/><path d="M602.70 366.40 L607.20 366.40 L605.20 363.40 L608.60 363.40 L613.60 368.10 L608.60 372.80 L605.20 372.80 L607.20 369.80 L602.70 369.80 Z" fill="#a9a3c9"/><circle cx="607.40" cy="390.30" r="3.80" fill="#a9a3c9"/><path d="M609.30 387.60 V385.30 A2.20 2.20 0 0 1 613.70 385.30 V387.00" fill="none" stroke="#a9a3c9" stroke-width="1.50"/><rect x="761" y="345" width="9" height="10" fill="#5a4e8a"/><rect x="761" y="355" width="9" height="6" fill="#a6a6a6"/><rect x="761" y="361" width="9" height="11" fill="#5a4e8a"/><rect x="623" y="322" width="133" height="73" fill="#0a0a0a"/><use href="#beans" x="625" y="322" width="129" height="73"/><rect x="588.5" y="401.5" width="145" height="17" fill="#26272a" stroke="#5a5b5e"/><rect x="735.5" y="401.5" width="18" height="17" fill="#26272a" stroke="#5a5b5e"/><rect x="753.5" y="401.5" width="17" height="17" fill="#26272a" stroke="#5a5b5e"/><circle cx="744" cy="410.7" r="4.4" fill="#29366a"/><path d="M762 405 L763.5 409 L767.5 410.5 L763.5 412 L762 416 L760.5 412 L756.5 410.5 L760.5 409 Z" fill="#4e4f53"/></svg><div class="t mono" style="left:591px;top:403px;font-size:13px;color:#dcdcdc">moviefilein1</div>
<svg style="left:0;top:0" width="1920" height="1009"><rect x="1165" y="387" width="183" height="82" fill="#6a6a6a"/><rect x="1165" y="387" width="183" height="1" fill="#8a8a8a"/><rect x="1165" y="468" width="183" height="1" fill="#8c8c8c"/><rect x="1337" y="387" width="11" height="82" fill="#8e8e8e"/><rect x="1165" y="387" width="30" height="82" fill="#5a4e8a"/><rect x="1165.5" y="387.5" width="29" height="81" fill="none" stroke="#8c7cd8" stroke-width="1"/><rect x="1175" y="387" width="1" height="82" fill="#8c7cd8"/><rect x="1175" y="407" width="20" height="1" fill="#8c7cd8"/><rect x="1175" y="426" width="20" height="1" fill="#8c7cd8"/><rect x="1175" y="446" width="20" height="1" fill="#8c7cd8"/><rect x="1175" y="466" width="20" height="1" fill="#8c7cd8"/><circle cx="1185" cy="398.3" r="4.80" fill="none" stroke="#a9a3c9" stroke-width="1.70"/><circle cx="1185" cy="398.3" r="2.30" fill="#a9a3c9" opacity=".6"/><path d="M1191.10 412.40 L1181.80 417.20 L1184.80 418.10 L1178.90 424.60 L1188.60 420.40 L1185.50 419.40 Z" fill="#a9a3c9"/><path d="M1179.70 436.40 L1184.20 436.40 L1182.20 433.40 L1185.60 433.40 L1190.60 438.10 L1185.60 442.80 L1182.20 442.80 L1184.20 439.80 L1179.70 439.80 Z" fill="#a9a3c9"/><circle cx="1184.40" cy="460.30" r="3.80" fill="#a9a3c9"/><path d="M1186.30 457.60 V455.30 A2.20 2.20 0 0 1 1190.70 455.30 V457.00" fill="none" stroke="#a9a3c9" stroke-width="1.50"/><rect x="1166" y="416.0" width="9" height="5" fill="#8c7cd8"/><rect x="1166" y="436.5" width="9" height="5" fill="#8c7cd8"/><rect x="1338" y="415" width="9" height="10" fill="#5a4e8a"/><rect x="1338" y="425" width="9" height="6" fill="#a6a6a6"/><rect x="1338" y="431" width="9" height="11" fill="#5a4e8a"/><rect x="1200" y="392" width="133" height="73" fill="#0a0a0a"/><use href="#beans2" x="1202" y="392" width="129" height="73"/><rect x="1165.5" y="471.5" width="145" height="17" fill="#26272a" stroke="#5a5b5e"/><rect x="1312.5" y="471.5" width="18" height="17" fill="#26272a" stroke="#5a5b5e"/><rect x="1330.5" y="471.5" width="17" height="17" fill="#26272a" stroke="#5a5b5e"/><circle cx="1321" cy="480.7" r="4.4" fill="#29366a"/><path d="M1339 475 L1340.5 479 L1344.5 480.5 L1340.5 482 L1339 486 L1337.5 482 L1333.5 480.5 L1337.5 479 Z" fill="#4e4f53"/></svg><div class="t mono" style="left:1168px;top:474px;font-size:13px;color:#dcdcdc">displace1</div>
<svg style="left:0;top:0" width="1920" height="1009"><rect x="1756" y="387" width="183" height="82" fill="#6a6a6a"/><rect x="1756" y="387" width="183" height="1" fill="#8a8a8a"/><rect x="1756" y="468" width="183" height="1" fill="#8c8c8c"/><rect x="1928" y="387" width="11" height="82" fill="#8e8e8e"/><rect x="1756" y="387" width="30" height="82" fill="#5a4e8a"/><rect x="1756.5" y="387.5" width="29" height="81" fill="none" stroke="#8c7cd8" stroke-width="1"/><rect x="1766" y="387" width="1" height="82" fill="#8c7cd8"/><rect x="1766" y="407" width="20" height="1" fill="#8c7cd8"/><rect x="1766" y="426" width="20" height="1" fill="#8c7cd8"/><rect x="1766" y="446" width="20" height="1" fill="#8c7cd8"/><rect x="1766" y="466" width="20" height="1" fill="#8c7cd8"/><circle cx="1776" cy="398.3" r="4.80" fill="none" stroke="#a9a3c9" stroke-width="1.70"/><circle cx="1776" cy="398.3" r="2.30" fill="#a9a3c9" opacity=".6"/><path d="M1782.10 412.40 L1772.80 417.20 L1775.80 418.10 L1769.90 424.60 L1779.60 420.40 L1776.50 419.40 Z" fill="#a9a3c9"/><path d="M1770.70 436.40 L1775.20 436.40 L1773.20 433.40 L1776.60 433.40 L1781.60 438.10 L1776.60 442.80 L1773.20 442.80 L1775.20 439.80 L1770.70 439.80 Z" fill="#a9a3c9"/><circle cx="1775.40" cy="460.30" r="3.80" fill="#a9a3c9"/><path d="M1777.30 457.60 V455.30 A2.20 2.20 0 0 1 1781.70 455.30 V457.00" fill="none" stroke="#a9a3c9" stroke-width="1.50"/><rect x="1757" y="426.5" width="9" height="5" fill="#8c7cd8"/><rect x="1929" y="415" width="9" height="10" fill="#5a4e8a"/><rect x="1929" y="425" width="9" height="6" fill="#a6a6a6"/><rect x="1929" y="431" width="9" height="11" fill="#5a4e8a"/><rect x="1791" y="392" width="133" height="73" fill="#0a0a0a"/><use href="#beans2" x="1793" y="392" width="129" height="73"/><rect x="1756.5" y="471.5" width="145" height="17" fill="#26272a" stroke="#5a5b5e"/><rect x="1903.5" y="471.5" width="18" height="17" fill="#26272a" stroke="#5a5b5e"/><rect x="1921.5" y="471.5" width="17" height="17" fill="#26272a" stroke="#5a5b5e"/><circle cx="1912" cy="480.7" r="4.4" fill="#29366a"/><path d="M1930 475 L1931.5 479 L1935.5 480.5 L1931.5 482 L1930 486 L1928.5 482 L1924.5 480.5 L1928.5 479 Z" fill="#4e4f53"/></svg><div class="t mono" style="left:1759px;top:474px;font-size:13px;color:#dcdcdc">out1</div>
<svg style="left:0;top:0" width="1920" height="1009"><rect x="588" y="492" width="183" height="48" fill="#6a6a6a"/><rect x="588" y="492" width="183" height="1" fill="#8a8a8a"/><rect x="588" y="539" width="183" height="1" fill="#8c8c8c"/><rect x="760" y="492" width="11" height="48" fill="#979797"/><rect x="588" y="492" width="21" height="48" fill="#5a4e8a"/><rect x="588.5" y="492.5" width="20" height="47" fill="none" stroke="#8c7cd8" stroke-width="1"/><rect x="598" y="492" width="1" height="48" fill="#8c7cd8"/><rect x="598" y="503" width="11" height="1" fill="#8c7cd8"/><rect x="598" y="514" width="11" height="1" fill="#8c7cd8"/><rect x="598" y="525" width="11" height="1" fill="#8c7cd8"/><rect x="598" y="535" width="11" height="1" fill="#8c7cd8"/><circle cx="603.5" cy="498" r="2.50" fill="none" stroke="#a9a3c9" stroke-width="0.88"/><circle cx="603.5" cy="498" r="1.20" fill="#a9a3c9" opacity=".6"/><path d="M606.67 505.83 L601.84 508.32 L603.40 508.79 L600.33 512.17 L605.37 509.99 L603.76 509.47 Z" fill="#a9a3c9"/><path d="M600.74 518.92 L603.08 518.92 L602.04 517.36 L603.81 517.36 L606.41 519.80 L603.81 522.24 L602.04 522.24 L603.08 520.68 L600.74 520.68 Z" fill="#a9a3c9"/><circle cx="603.19" cy="531.38" r="1.98" fill="#a9a3c9"/><path d="M604.18 529.98 V528.78 A1.14 1.14 0 0 1 606.46 528.78 V529.67" fill="none" stroke="#a9a3c9" stroke-width="0.78"/><rect x="761" y="508" width="9" height="5" fill="#5a4e8a"/><rect x="761" y="513" width="9" height="5" fill="#a6a6a6"/><rect x="761" y="518" width="9" height="6" fill="#5a4e8a"/><rect x="614" y="497" width="142" height="38" fill="#191919"/><rect x="614" y="515.3" width="142" height="1.5" fill="#8a8a8a"/><rect x="588.5" y="541.5" width="145" height="17" fill="#26272a" stroke="#5a5b5e"/><rect x="735.5" y="541.5" width="18" height="17" fill="#26272a" stroke="#5a5b5e"/><rect x="753.5" y="541.5" width="17" height="17" fill="#26272a" stroke="#5a5b5e"/><circle cx="744" cy="550.7" r="4.4" fill="#29366a"/><path d="M762 545 L763.5 549 L767.5 550.5 L763.5 552 L762 556 L760.5 552 L756.5 550.5 L760.5 549 Z" fill="#4e4f53"/></svg><div class="t mono" style="left:591px;top:544px;font-size:13px;color:#dcdcdc">chopto1</div>
<svg style="left:0;top:0" width="1920" height="1009"><path d="M679 536 V602" stroke="#8e8ea8" stroke-width="1.8" stroke-dasharray="1.7 2.4" fill="none" opacity=".7"/><path d="M679 586 L683 594 H675 Z" fill="#7a7a96"/></svg>
<svg style="left:0;top:0" width="1920" height="1009"><rect x="580" y="593" width="199" height="143" fill="#134a17" stroke="#1be01b" stroke-width="2"/><rect x="588" y="601" width="183" height="108" fill="#6a6a6a"/><rect x="588" y="601" width="183" height="1" fill="#8a8a8a"/><rect x="588" y="708" width="183" height="1" fill="#8c8c8c"/><rect x="760" y="601" width="11" height="108" fill="#979797"/><rect x="588" y="601" width="34" height="108" fill="#5e8540"/><rect x="588.5" y="601.5" width="33" height="107" fill="none" stroke="#8fc06a" stroke-width="1"/><rect x="598" y="601" width="1" height="108" fill="#8fc06a"/><rect x="598" y="625" width="24" height="1.6" fill="#8fc06a"/><rect x="598" y="648.5" width="24" height="1.6" fill="#8fc06a"/><rect x="598" y="672.2" width="24" height="1.6" fill="#8fc06a"/><rect x="598" y="696.5" width="24" height="1.6" fill="#8fc06a"/><circle cx="610.2" cy="614.7" r="5.76" fill="none" stroke="#abc795" stroke-width="2.04"/><circle cx="610.2" cy="614.7" r="2.76" fill="#abc795" opacity=".6"/><path d="M617.52 630.68 L606.36 636.44 L609.96 637.52 L602.88 645.32 L614.52 640.28 L610.80 639.08 Z" fill="#abc795"/><path d="M603.84 660.26 L609.24 660.26 L606.84 656.66 L610.92 656.66 L616.92 662.30 L610.92 667.94 L606.84 667.94 L609.24 664.34 L603.84 664.34 Z" fill="#abc795"/><circle cx="609.48" cy="688.34" r="4.56" fill="#abc795"/><path d="M611.76 685.10 V682.34 A2.64 2.64 0 0 1 617.04 682.34 V684.38" fill="none" stroke="#abc795" stroke-width="1.80"/><rect x="588" y="652" width="10" height="5" fill="#8fc06a"/><rect x="588" y="653" width="10" height="3" fill="#111"/><rect x="761" y="653" width="10" height="3" fill="#111"/><rect x="761" y="636" width="9" height="15" fill="#5e8540"/><rect x="761" y="657" width="9" height="16" fill="#5e8540"/><rect x="627" y="606" width="129" height="98" fill="#000"/><rect x="652.5" y="609" width="1" height="93" fill="#444"/><rect x="671.0" y="609" width="1" height="93" fill="#444"/><rect x="689.8" y="609" width="1" height="93" fill="#444"/><rect x="708.5" y="609" width="1" height="93" fill="#444"/><rect x="727.0" y="609" width="1" height="93" fill="#444"/><rect x="745.8" y="609" width="1" height="93" fill="#444"/><path d="M634.5 609 V702" stroke="#585858" stroke-width="1" stroke-dasharray="7.4 8.9" stroke-dashoffset="-2"/><rect x="637" y="620.3" width="114" height="1" fill="#484848"/><rect x="630" y="656.5" width="121" height="1" fill="#484848"/><path d="M642 694 H746" stroke="#3c3c3c" stroke-width="1" stroke-dasharray="8 8"/><path d="M634.5 654.1 C635.5 654.5 638.5 655.2 640.8 656.7 C643.1 658.2 645.5 662.6 648.3 663 C651.1 663.4 654.6 660.6 657.6 659.2 C660.6 657.8 663.5 654.6 666 654.5 C668.5 654.4 670.4 656.2 672.8 658.3 C675.2 660.3 677.9 666.6 680.4 666.8 C682.9 666.9 685.5 662.9 688 659.2 C690.5 655.6 693.7 647.6 695.5 644.9 C697.3 642.2 697.6 642.2 698.9 643.2 C700.2 644.2 701.1 647.7 703.1 650.8 C705.1 653.9 708.5 660.5 710.7 661.7 C713.0 663.0 713.9 661.0 716.6 658.3 C719.3 655.6 723.8 648.7 726.7 645.7 C729.7 642.7 732.2 640.4 734.3 640.3 C736.4 640.2 737.6 641.6 739.3 644.9 C741.0 648.2 743.5 657.5 744.4 660" fill="none" stroke="#d83020" stroke-width="1.1"/><circle cx="634.5" cy="654.2" r="2.2" fill="#e03828"/><circle cx="744.4" cy="660" r="2.2" fill="#e03828"/><rect x="628.5" y="653.5" width="3" height="1" fill="#d83020"/><rect x="749" y="660" width="4" height="1" fill="#d83020"/><rect x="588.5" y="710.5" width="127" height="17" fill="#26272a" stroke="#5a5b5e"/><rect x="717.5" y="710.5" width="18" height="17" fill="#26272a" stroke="#5a5b5e"/><rect x="735.5" y="710.5" width="18" height="17" fill="#26272a" stroke="#5a5b5e"/><rect x="753.5" y="710.5" width="17" height="17" fill="#26272a" stroke="#5a5b5e"/><circle cx="726" cy="719.7" r="4.4" fill="#2c4828"/><circle cx="744" cy="719.7" r="4.4" fill="#29366a"/><path d="M762 714 L763.5 718 L767.5 719.5 L763.5 721 L762 725 L760.5 721 L756.5 719.5 L760.5 718 Z" fill="#4e4f53"/></svg><div class="t mono" style="left:591px;top:713px;font-size:13px;color:#dcdcdc">noise1</div><div class="t" style="left:630px;top:608px;font-size:12px;color:#c8c8c8">1</div><div class="t" style="left:629px;top:645px;font-size:12px;color:#c8c8c8;letter-spacing:0.86px">0.5</div><div class="t" style="left:629.5px;top:682.5px;font-size:12px;color:#c8c8c8">0</div><svg style="left:0;top:0" width="1920" height="1009"><circle cx="634.5" cy="654.2" r="2.3" fill="#e03828"/><rect x="628.5" y="653.5" width="3" height="1" fill="#d83020"/></svg><div class="t" style="left:672px;top:626px;font-size:12px;color:#d83020;letter-spacing:.5px">chan1</div>
<svg style="left:0;top:0" width="1920" height="1009"><path d="M679 592 V606" stroke="#8e8ea8" stroke-width="2" stroke-dasharray="2 2.6" fill="none" opacity=".6"/></svg>
<svg style="left:0;top:0" width="1920" height="1009"><defs><clipPath id="cfl"><path d="M1492.4 395 L1542 407.5 L1542 488.2 L1496 462.9 Z"/></clipPath><clipPath id="cfr"><path d="M1542 407.5 L1595.8 397 L1592.5 464.5 L1542 488.2 Z"/></clipPath><filter id="bl" x="-20%" y="-20%" width="140%" height="140%"><feGaussianBlur stdDeviation="0.9"/></filter></defs><rect x="1432" y="349" width="224" height="163" fill="#18181a"/><path d="M1432 393.5 L1655.5 469.9" stroke="#d84848" stroke-width="1.2"/><path d="M1432 465.2 L1655.5 398.1" stroke="#5050e8" stroke-width="1.3"/><path d="M1492.4 395 L1542 407.5 L1542 488.2 L1496 462.9 Z" fill="#b2b2b4"/><path d="M1542 407.5 L1595.8 397 L1592.5 464.5 L1542 488.2 Z" fill="#c8c8ca"/><path d="M1492.4 395 L1542 407.5 L1595.8 397 L1545 388 Z" fill="#b0a49c"/><g clip-path="url(#cfl)" filter="url(#bl)" opacity=".95"><ellipse cx="1508.5" cy="413.0" rx="1.5" ry="3.6" fill="#c8921a" transform="rotate(-31 1508.5 413.0)"/><ellipse cx="1518.7" cy="431.4" rx="1.5" ry="3.6" fill="#c8921a" transform="rotate(20 1518.7 431.4)"/><ellipse cx="1503.3" cy="407.4" rx="1.5" ry="3.6" fill="#a01824" transform="rotate(-31 1503.3 407.4)"/><ellipse cx="1497.4" cy="436.5" rx="1.5" ry="3.6" fill="#33802a" transform="rotate(22 1497.4 436.5)"/><ellipse cx="1523.3" cy="450.1" rx="1.5" ry="3.6" fill="#c8921a" transform="rotate(-0 1523.3 450.1)"/><ellipse cx="1512.0" cy="484.0" rx="1.5" ry="3.6" fill="#c8921a" transform="rotate(-2 1512.0 484.0)"/><ellipse cx="1499.4" cy="436.0" rx="1.5" ry="3.6" fill="#33802a" transform="rotate(-1 1499.4 436.0)"/><ellipse cx="1519.9" cy="458.7" rx="1.5" ry="3.6" fill="#33802a" transform="rotate(-0 1519.9 458.7)"/><ellipse cx="1523.7" cy="432.0" rx="1.5" ry="3.6" fill="#3a2a70" transform="rotate(-1 1523.7 432.0)"/><ellipse cx="1522.7" cy="442.7" rx="1.5" ry="3.6" fill="#a01824" transform="rotate(12 1522.7 442.7)"/><ellipse cx="1515.3" cy="479.4" rx="1.5" ry="3.6" fill="#15131a" transform="rotate(-17 1515.3 479.4)"/><ellipse cx="1531.1" cy="460.1" rx="1.5" ry="3.6" fill="#1c5aa0" transform="rotate(-30 1531.1 460.1)"/><ellipse cx="1507.4" cy="442.6" rx="1.5" ry="3.6" fill="#d04816" transform="rotate(9 1507.4 442.6)"/><ellipse cx="1506.8" cy="484.3" rx="1.5" ry="3.6" fill="#33802a" transform="rotate(-4 1506.8 484.3)"/><ellipse cx="1500.9" cy="429.4" rx="1.5" ry="3.6" fill="#33802a" transform="rotate(-10 1500.9 429.4)"/><ellipse cx="1539.2" cy="406.7" rx="1.5" ry="3.6" fill="#d04816" transform="rotate(-15 1539.2 406.7)"/><ellipse cx="1509.8" cy="442.7" rx="1.5" ry="3.6" fill="#2a2238" transform="rotate(-31 1509.8 442.7)"/><ellipse cx="1497.5" cy="423.2" rx="1.5" ry="3.6" fill="#3a2a70" transform="rotate(-31 1497.5 423.2)"/><ellipse cx="1526.7" cy="455.7" rx="1.5" ry="3.6" fill="#2a2238" transform="rotate(-18 1526.7 455.7)"/><ellipse cx="1511.5" cy="457.5" rx="1.5" ry="3.6" fill="#a01824" transform="rotate(21 1511.5 457.5)"/><ellipse cx="1510.1" cy="452.5" rx="1.5" ry="3.6" fill="#33802a" transform="rotate(-31 1510.1 452.5)"/><ellipse cx="1529.9" cy="411.1" rx="1.5" ry="3.6" fill="#1c5aa0" transform="rotate(-11 1529.9 411.1)"/><ellipse cx="1537.0" cy="442.7" rx="1.5" ry="3.6" fill="#15131a" transform="rotate(-8 1537.0 442.7)"/><ellipse cx="1519.4" cy="476.0" rx="1.5" ry="3.6" fill="#a01824" transform="rotate(17 1519.4 476.0)"/><ellipse cx="1506.4" cy="435.7" rx="1.5" ry="3.6" fill="#15131a" transform="rotate(6 1506.4 435.7)"/><ellipse cx="1511.3" cy="419.8" rx="1.5" ry="3.6" fill="#3a2a70" transform="rotate(-24 1511.3 419.8)"/><ellipse cx="1504.1" cy="420.1" rx="1.5" ry="3.6" fill="#33802a" transform="rotate(15 1504.1 420.1)"/><ellipse cx="1501.8" cy="424.2" rx="1.5" ry="3.6" fill="#d04816" transform="rotate(-10 1501.8 424.2)"/><ellipse cx="1510.7" cy="448.7" rx="1.5" ry="3.6" fill="#d04816" transform="rotate(6 1510.7 448.7)"/><ellipse cx="1517.7" cy="453.1" rx="1.5" ry="3.6" fill="#c8921a" transform="rotate(-8 1517.7 453.1)"/><ellipse cx="1534.8" cy="481.9" rx="1.5" ry="3.6" fill="#3a2a70" transform="rotate(-11 1534.8 481.9)"/><ellipse cx="1511.9" cy="441.4" rx="1.5" ry="3.6" fill="#3a2a70" transform="rotate(-31 1511.9 441.4)"/><ellipse cx="1496.2" cy="418.0" rx="1.5" ry="3.6" fill="#15131a" transform="rotate(-28 1496.2 418.0)"/><ellipse cx="1521.8" cy="408.8" rx="1.5" ry="3.6" fill="#d04816" transform="rotate(-3 1521.8 408.8)"/><ellipse cx="1538.5" cy="452.8" rx="1.5" ry="3.6" fill="#3a2a70" transform="rotate(17 1538.5 452.8)"/><ellipse cx="1522.5" cy="412.8" rx="1.5" ry="3.6" fill="#a01824" transform="rotate(22 1522.5 412.8)"/><ellipse cx="1521.9" cy="440.8" rx="1.5" ry="3.6" fill="#33802a" transform="rotate(16 1521.9 440.8)"/><ellipse cx="1540.7" cy="440.1" rx="1.5" ry="3.6" fill="#33802a" transform="rotate(-16 1540.7 440.1)"/><ellipse cx="1499.9" cy="464.5" rx="1.5" ry="3.6" fill="#a01824" transform="rotate(-6 1499.9 464.5)"/><ellipse cx="1526.2" cy="444.4" rx="1.5" ry="3.6" fill="#d0507e" transform="rotate(22 1526.2 444.4)"/><ellipse cx="1518.4" cy="412.6" rx="1.5" ry="3.6" fill="#a01824" transform="rotate(10 1518.4 412.6)"/><ellipse cx="1507.3" cy="455.3" rx="1.5" ry="3.6" fill="#3a2a70" transform="rotate(7 1507.3 455.3)"/><ellipse cx="1505.5" cy="431.5" rx="1.5" ry="3.6" fill="#15131a" transform="rotate(-14 1505.5 431.5)"/><ellipse cx="1503.7" cy="446.6" rx="1.5" ry="3.6" fill="#d04816" transform="rotate(3 1503.7 446.6)"/><ellipse cx="1522.4" cy="467.8" rx="1.5" ry="3.6" fill="#d0507e" transform="rotate(13 1522.4 467.8)"/><ellipse cx="1532.3" cy="463.6" rx="1.5" ry="3.6" fill="#1c5aa0" transform="rotate(-23 1532.3 463.6)"/><ellipse cx="1516.7" cy="462.9" rx="1.5" ry="3.6" fill="#a01824" transform="rotate(12 1516.7 462.9)"/><ellipse cx="1515.7" cy="416.7" rx="1.5" ry="3.6" fill="#15131a" transform="rotate(-8 1515.7 416.7)"/><ellipse cx="1538.0" cy="485.0" rx="1.5" ry="3.6" fill="#15131a" transform="rotate(-30 1538.0 485.0)"/><ellipse cx="1497.9" cy="440.4" rx="1.5" ry="3.6" fill="#d04816" transform="rotate(-23 1497.9 440.4)"/><ellipse cx="1523.0" cy="477.4" rx="1.5" ry="3.6" fill="#a01824" transform="rotate(-6 1523.0 477.4)"/><ellipse cx="1524.3" cy="468.8" rx="1.5" ry="3.6" fill="#3a2a70" transform="rotate(15 1524.3 468.8)"/><ellipse cx="1498.8" cy="433.4" rx="1.5" ry="3.6" fill="#d0507e" transform="rotate(-6 1498.8 433.4)"/><ellipse cx="1501.6" cy="467.9" rx="1.5" ry="3.6" fill="#d04816" transform="rotate(-30 1501.6 467.9)"/><ellipse cx="1538.4" cy="462.1" rx="1.5" ry="3.6" fill="#2a2238" transform="rotate(-11 1538.4 462.1)"/><ellipse cx="1538.4" cy="462.3" rx="1.5" ry="3.6" fill="#15131a" transform="rotate(25 1538.4 462.3)"/><ellipse cx="1494.3" cy="450.8" rx="1.5" ry="3.6" fill="#2a2238" transform="rotate(13 1494.3 450.8)"/><ellipse cx="1500.0" cy="471.1" rx="1.5" ry="3.6" fill="#33802a" transform="rotate(4 1500.0 471.1)"/><ellipse cx="1509.8" cy="447.2" rx="1.5" ry="3.6" fill="#d04816" transform="rotate(-34 1509.8 447.2)"/><ellipse cx="1531.4" cy="462.5" rx="1.5" ry="3.6" fill="#33802a" transform="rotate(-3 1531.4 462.5)"/><ellipse cx="1537.8" cy="437.3" rx="1.5" ry="3.6" fill="#d0507e" transform="rotate(15 1537.8 437.3)"/><ellipse cx="1503.1" cy="421.7" rx="1.5" ry="3.6" fill="#3a2a70" transform="rotate(-5 1503.1 421.7)"/><ellipse cx="1529.7" cy="428.0" rx="1.5" ry="3.6" fill="#a01824" transform="rotate(15 1529.7 428.0)"/><ellipse cx="1495.9" cy="463.6" rx="1.5" ry="3.6" fill="#2a2238" transform="rotate(5 1495.9 463.6)"/><ellipse cx="1532.1" cy="444.4" rx="1.5" ry="3.6" fill="#d04816" transform="rotate(-3 1532.1 444.4)"/><ellipse cx="1518.1" cy="401.6" rx="1.5" ry="3.6" fill="#2a2238" transform="rotate(12 1518.1 401.6)"/><ellipse cx="1522.2" cy="466.7" rx="1.5" ry="3.6" fill="#d04816" transform="rotate(-25 1522.2 466.7)"/><ellipse cx="1515.7" cy="462.4" rx="1.5" ry="3.6" fill="#c8921a" transform="rotate(-15 1515.7 462.4)"/><ellipse cx="1517.9" cy="447.8" rx="1.5" ry="3.6" fill="#33802a" transform="rotate(18 1517.9 447.8)"/><ellipse cx="1495.7" cy="416.5" rx="1.5" ry="3.6" fill="#c8921a" transform="rotate(11 1495.7 416.5)"/><ellipse cx="1517.4" cy="448.3" rx="1.5" ry="3.6" fill="#3a2a70" transform="rotate(-8 1517.4 448.3)"/><ellipse cx="1522.4" cy="443.5" rx="1.5" ry="3.6" fill="#d0507e" transform="rotate(7 1522.4 443.5)"/><ellipse cx="1514.7" cy="445.9" rx="1.5" ry="3.6" fill="#33802a" transform="rotate(-5 1514.7 445.9)"/><ellipse cx="1504.9" cy="445.0" rx="1.5" ry="3.6" fill="#a01824" transform="rotate(20 1504.9 445.0)"/><ellipse cx="1535.9" cy="417.4" rx="1.5" ry="3.6" fill="#2a2238" transform="rotate(-27 1535.9 417.4)"/><ellipse cx="1498.8" cy="438.0" rx="1.5" ry="3.6" fill="#3a2a70" transform="rotate(5 1498.8 438.0)"/><ellipse cx="1513.6" cy="418.3" rx="1.5" ry="3.6" fill="#3a2a70" transform="rotate(12 1513.6 418.3)"/><ellipse cx="1536.1" cy="413.3" rx="1.5" ry="3.6" fill="#15131a" transform="rotate(-26 1536.1 413.3)"/><ellipse cx="1535.4" cy="483.2" rx="1.5" ry="3.6" fill="#1c5aa0" transform="rotate(10 1535.4 483.2)"/><ellipse cx="1497.5" cy="476.1" rx="1.5" ry="3.6" fill="#15131a" transform="rotate(24 1497.5 476.1)"/><ellipse cx="1533.0" cy="413.9" rx="1.5" ry="3.6" fill="#a01824" transform="rotate(25 1533.0 413.9)"/><ellipse cx="1512.4" cy="436.2" rx="1.5" ry="3.6" fill="#15131a" transform="rotate(-16 1512.4 436.2)"/><ellipse cx="1527.7" cy="401.7" rx="1.5" ry="3.6" fill="#2a2238" transform="rotate(-9 1527.7 401.7)"/><ellipse cx="1493.9" cy="428.5" rx="1.5" ry="3.6" fill="#3a2a70" transform="rotate(-4 1493.9 428.5)"/><ellipse cx="1496.1" cy="484.7" rx="1.5" ry="3.6" fill="#1c5aa0" transform="rotate(23 1496.1 484.7)"/><ellipse cx="1498.0" cy="422.8" rx="1.5" ry="3.6" fill="#c8921a" transform="rotate(19 1498.0 422.8)"/><ellipse cx="1501.7" cy="465.0" rx="1.5" ry="3.6" fill="#a01824" transform="rotate(16 1501.7 465.0)"/><ellipse cx="1525.4" cy="481.4" rx="1.5" ry="3.6" fill="#3a2a70" transform="rotate(-26 1525.4 481.4)"/><ellipse cx="1537.1" cy="449.1" rx="1.5" ry="3.6" fill="#d04816" transform="rotate(-30 1537.1 449.1)"/><ellipse cx="1495.8" cy="459.2" rx="1.5" ry="3.6" fill="#a01824" transform="rotate(19 1495.8 459.2)"/><ellipse cx="1505.9" cy="401.4" rx="1.5" ry="3.6" fill="#3a2a70" transform="rotate(13 1505.9 401.4)"/><ellipse cx="1497.0" cy="473.6" rx="1.5" ry="3.6" fill="#3a2a70" transform="rotate(-19 1497.0 473.6)"/><ellipse cx="1498.8" cy="401.0" rx="1.5" ry="3.6" fill="#a01824" transform="rotate(21 1498.8 401.0)"/><ellipse cx="1505.9" cy="411.1" rx="1.5" ry="3.6" fill="#1c5aa0" transform="rotate(21 1505.9 411.1)"/><ellipse cx="1539.5" cy="422.5" rx="1.5" ry="3.6" fill="#15131a" transform="rotate(-23 1539.5 422.5)"/><ellipse cx="1508.0" cy="426.2" rx="1.5" ry="3.6" fill="#d0507e" transform="rotate(-18 1508.0 426.2)"/><ellipse cx="1517.0" cy="415.3" rx="1.5" ry="3.6" fill="#15131a" transform="rotate(13 1517.0 415.3)"/><ellipse cx="1540.7" cy="403.2" rx="1.5" ry="3.6" fill="#a01824" transform="rotate(9 1540.7 403.2)"/><ellipse cx="1519.5" cy="416.3" rx="1.5" ry="3.6" fill="#33802a" transform="rotate(-20 1519.5 416.3)"/><ellipse cx="1514.5" cy="456.6" rx="1.5" ry="3.6" fill="#a01824" transform="rotate(4 1514.5 456.6)"/><ellipse cx="1519.2" cy="476.4" rx="1.5" ry="3.6" fill="#3a2a70" transform="rotate(6 1519.2 476.4)"/><ellipse cx="1540.2" cy="429.5" rx="1.5" ry="3.6" fill="#d04816" transform="rotate(-11 1540.2 429.5)"/><ellipse cx="1509.7" cy="404.7" rx="1.5" ry="3.6" fill="#d04816" transform="rotate(-34 1509.7 404.7)"/><ellipse cx="1523.0" cy="475.7" rx="1.5" ry="3.6" fill="#a01824" transform="rotate(-25 1523.0 475.7)"/><ellipse cx="1497.1" cy="472.3" rx="1.5" ry="3.6" fill="#3a2a70" transform="rotate(1 1497.1 472.3)"/><ellipse cx="1526.2" cy="403.9" rx="1.5" ry="3.6" fill="#15131a" transform="rotate(-26 1526.2 403.9)"/><ellipse cx="1514.4" cy="422.6" rx="1.5" ry="3.6" fill="#d04816" transform="rotate(23 1514.4 422.6)"/><ellipse cx="1519.3" cy="421.0" rx="1.5" ry="3.6" fill="#3a2a70" transform="rotate(-22 1519.3 421.0)"/><ellipse cx="1501.8" cy="428.8" rx="1.5" ry="3.6" fill="#3a2a70" transform="rotate(-7 1501.8 428.8)"/><ellipse cx="1517.1" cy="417.3" rx="1.5" ry="3.6" fill="#a01824" transform="rotate(-30 1517.1 417.3)"/><ellipse cx="1532.2" cy="412.4" rx="1.5" ry="3.6" fill="#c8921a" transform="rotate(-11 1532.2 412.4)"/><ellipse cx="1507.4" cy="454.2" rx="1.5" ry="3.6" fill="#3a2a70" transform="rotate(0 1507.4 454.2)"/><ellipse cx="1518.4" cy="464.5" rx="1.5" ry="3.6" fill="#3a2a70" transform="rotate(11 1518.4 464.5)"/><ellipse cx="1527.6" cy="442.5" rx="1.5" ry="3.6" fill="#3a2a70" transform="rotate(8 1527.6 442.5)"/><ellipse cx="1523.9" cy="403.8" rx="1.5" ry="3.6" fill="#a01824" transform="rotate(9 1523.9 403.8)"/><ellipse cx="1532.0" cy="412.0" rx="1.5" ry="3.6" fill="#a01824" transform="rotate(15 1532.0 412.0)"/><ellipse cx="1521.0" cy="476.8" rx="1.5" ry="3.6" fill="#1c5aa0" transform="rotate(-30 1521.0 476.8)"/><ellipse cx="1495.0" cy="454.8" rx="1.5" ry="3.6" fill="#33802a" transform="rotate(-12 1495.0 454.8)"/><ellipse cx="1514.7" cy="404.4" rx="1.5" ry="3.6" fill="#a01824" transform="rotate(3 1514.7 404.4)"/><ellipse cx="1525.7" cy="442.1" rx="1.5" ry="3.6" fill="#a01824" transform="rotate(-8 1525.7 442.1)"/></g><g clip-path="url(#cfr)" filter="url(#bl)" opacity=".95"><ellipse cx="1546.6" cy="480.2" rx="1.5" ry="3.6" fill="#3a2a70" transform="rotate(18 1546.6 480.2)"/><ellipse cx="1546.4" cy="463.4" rx="1.5" ry="3.6" fill="#a01824" transform="rotate(28 1546.4 463.4)"/><ellipse cx="1587.0" cy="420.2" rx="1.5" ry="3.6" fill="#d0507e" transform="rotate(-10 1587.0 420.2)"/><ellipse cx="1576.8" cy="439.6" rx="1.5" ry="3.6" fill="#3a2a70" transform="rotate(-20 1576.8 439.6)"/><ellipse cx="1590.3" cy="424.7" rx="1.5" ry="3.6" fill="#c8921a" transform="rotate(15 1590.3 424.7)"/><ellipse cx="1576.4" cy="406.7" rx="1.5" ry="3.6" fill="#d04816" transform="rotate(-3 1576.4 406.7)"/><ellipse cx="1576.9" cy="459.6" rx="1.5" ry="3.6" fill="#d04816" transform="rotate(-24 1576.9 459.6)"/><ellipse cx="1546.2" cy="423.1" rx="1.5" ry="3.6" fill="#33802a" transform="rotate(20 1546.2 423.1)"/><ellipse cx="1578.1" cy="425.0" rx="1.5" ry="3.6" fill="#3a2a70" transform="rotate(5 1578.1 425.0)"/><ellipse cx="1567.2" cy="410.2" rx="1.5" ry="3.6" fill="#d0507e" transform="rotate(-5 1567.2 410.2)"/><ellipse cx="1547.5" cy="440.7" rx="1.5" ry="3.6" fill="#3a2a70" transform="rotate(5 1547.5 440.7)"/><ellipse cx="1585.6" cy="483.3" rx="1.5" ry="3.6" fill="#2a2238" transform="rotate(40 1585.6 483.3)"/><ellipse cx="1563.1" cy="478.8" rx="1.5" ry="3.6" fill="#d0507e" transform="rotate(-20 1563.1 478.8)"/><ellipse cx="1547.7" cy="464.3" rx="1.5" ry="3.6" fill="#a01824" transform="rotate(37 1547.7 464.3)"/><ellipse cx="1549.9" cy="470.5" rx="1.5" ry="3.6" fill="#a01824" transform="rotate(33 1549.9 470.5)"/><ellipse cx="1579.6" cy="419.9" rx="1.5" ry="3.6" fill="#33802a" transform="rotate(1 1579.6 419.9)"/><ellipse cx="1551.3" cy="481.7" rx="1.5" ry="3.6" fill="#2a2238" transform="rotate(1 1551.3 481.7)"/><ellipse cx="1580.8" cy="435.8" rx="1.5" ry="3.6" fill="#3a2a70" transform="rotate(-4 1580.8 435.8)"/><ellipse cx="1586.7" cy="400.1" rx="1.5" ry="3.6" fill="#d04816" transform="rotate(30 1586.7 400.1)"/><ellipse cx="1549.2" cy="479.7" rx="1.5" ry="3.6" fill="#a01824" transform="rotate(34 1549.2 479.7)"/><ellipse cx="1558.1" cy="432.0" rx="1.5" ry="3.6" fill="#3a2a70" transform="rotate(0 1558.1 432.0)"/><ellipse cx="1588.2" cy="406.6" rx="1.5" ry="3.6" fill="#a01824" transform="rotate(24 1588.2 406.6)"/><ellipse cx="1587.4" cy="424.1" rx="1.5" ry="3.6" fill="#c8921a" transform="rotate(29 1587.4 424.1)"/><ellipse cx="1557.9" cy="480.5" rx="1.5" ry="3.6" fill="#1c5aa0" transform="rotate(38 1557.9 480.5)"/><ellipse cx="1565.7" cy="427.1" rx="1.5" ry="3.6" fill="#15131a" transform="rotate(26 1565.7 427.1)"/><ellipse cx="1565.2" cy="402.5" rx="1.5" ry="3.6" fill="#3a2a70" transform="rotate(34 1565.2 402.5)"/><ellipse cx="1591.9" cy="447.2" rx="1.5" ry="3.6" fill="#3a2a70" transform="rotate(-22 1591.9 447.2)"/><ellipse cx="1581.1" cy="438.8" rx="1.5" ry="3.6" fill="#d04816" transform="rotate(17 1581.1 438.8)"/><ellipse cx="1557.9" cy="404.2" rx="1.5" ry="3.6" fill="#d04816" transform="rotate(-14 1557.9 404.2)"/><ellipse cx="1564.6" cy="424.2" rx="1.5" ry="3.6" fill="#a01824" transform="rotate(23 1564.6 424.2)"/><ellipse cx="1593.8" cy="422.4" rx="1.5" ry="3.6" fill="#1c5aa0" transform="rotate(-5 1593.8 422.4)"/><ellipse cx="1572.0" cy="433.9" rx="1.5" ry="3.6" fill="#15131a" transform="rotate(17 1572.0 433.9)"/><ellipse cx="1546.9" cy="443.1" rx="1.5" ry="3.6" fill="#33802a" transform="rotate(11 1546.9 443.1)"/><ellipse cx="1566.6" cy="428.6" rx="1.5" ry="3.6" fill="#2a2238" transform="rotate(3 1566.6 428.6)"/><ellipse cx="1571.5" cy="421.0" rx="1.5" ry="3.6" fill="#15131a" transform="rotate(-3 1571.5 421.0)"/><ellipse cx="1547.7" cy="420.6" rx="1.5" ry="3.6" fill="#a01824" transform="rotate(28 1547.7 420.6)"/><ellipse cx="1553.5" cy="401.7" rx="1.5" ry="3.6" fill="#a01824" transform="rotate(-0 1553.5 401.7)"/><ellipse cx="1581.8" cy="418.1" rx="1.5" ry="3.6" fill="#a01824" transform="rotate(-3 1581.8 418.1)"/><ellipse cx="1546.2" cy="423.9" rx="1.5" ry="3.6" fill="#15131a" transform="rotate(-17 1546.2 423.9)"/><ellipse cx="1569.2" cy="454.1" rx="1.5" ry="3.6" fill="#d0507e" transform="rotate(-19 1569.2 454.1)"/><ellipse cx="1589.6" cy="433.1" rx="1.5" ry="3.6" fill="#2a2238" transform="rotate(3 1589.6 433.1)"/><ellipse cx="1559.2" cy="470.0" rx="1.5" ry="3.6" fill="#a01824" transform="rotate(-17 1559.2 470.0)"/><ellipse cx="1565.1" cy="465.7" rx="1.5" ry="3.6" fill="#33802a" transform="rotate(38 1565.1 465.7)"/><ellipse cx="1568.5" cy="406.3" rx="1.5" ry="3.6" fill="#2a2238" transform="rotate(38 1568.5 406.3)"/><ellipse cx="1555.9" cy="409.4" rx="1.5" ry="3.6" fill="#d04816" transform="rotate(-15 1555.9 409.4)"/><ellipse cx="1593.5" cy="409.4" rx="1.5" ry="3.6" fill="#2a2238" transform="rotate(-19 1593.5 409.4)"/><ellipse cx="1583.4" cy="400.1" rx="1.5" ry="3.6" fill="#d04816" transform="rotate(-10 1583.4 400.1)"/><ellipse cx="1590.8" cy="455.5" rx="1.5" ry="3.6" fill="#3a2a70" transform="rotate(38 1590.8 455.5)"/><ellipse cx="1575.6" cy="445.4" rx="1.5" ry="3.6" fill="#a01824" transform="rotate(20 1575.6 445.4)"/><ellipse cx="1548.8" cy="406.1" rx="1.5" ry="3.6" fill="#d0507e" transform="rotate(0 1548.8 406.1)"/><ellipse cx="1554.6" cy="451.7" rx="1.5" ry="3.6" fill="#a01824" transform="rotate(10 1554.6 451.7)"/><ellipse cx="1594.8" cy="424.0" rx="1.5" ry="3.6" fill="#d04816" transform="rotate(17 1594.8 424.0)"/><ellipse cx="1589.0" cy="440.9" rx="1.5" ry="3.6" fill="#1c5aa0" transform="rotate(11 1589.0 440.9)"/><ellipse cx="1544.5" cy="435.4" rx="1.5" ry="3.6" fill="#3a2a70" transform="rotate(-21 1544.5 435.4)"/><ellipse cx="1553.1" cy="476.1" rx="1.5" ry="3.6" fill="#a01824" transform="rotate(-20 1553.1 476.1)"/><ellipse cx="1554.8" cy="436.5" rx="1.5" ry="3.6" fill="#15131a" transform="rotate(-10 1554.8 436.5)"/><ellipse cx="1544.8" cy="429.1" rx="1.5" ry="3.6" fill="#a01824" transform="rotate(-1 1544.8 429.1)"/><ellipse cx="1563.6" cy="400.6" rx="1.5" ry="3.6" fill="#3a2a70" transform="rotate(23 1563.6 400.6)"/><ellipse cx="1569.3" cy="417.6" rx="1.5" ry="3.6" fill="#d0507e" transform="rotate(-5 1569.3 417.6)"/><ellipse cx="1585.6" cy="419.8" rx="1.5" ry="3.6" fill="#1c5aa0" transform="rotate(-8 1585.6 419.8)"/><ellipse cx="1589.2" cy="409.4" rx="1.5" ry="3.6" fill="#33802a" transform="rotate(15 1589.2 409.4)"/><ellipse cx="1589.6" cy="441.7" rx="1.5" ry="3.6" fill="#c8921a" transform="rotate(37 1589.6 441.7)"/><ellipse cx="1550.6" cy="433.8" rx="1.5" ry="3.6" fill="#d0507e" transform="rotate(-23 1550.6 433.8)"/><ellipse cx="1574.0" cy="435.7" rx="1.5" ry="3.6" fill="#c8921a" transform="rotate(-13 1574.0 435.7)"/><ellipse cx="1566.4" cy="461.2" rx="1.5" ry="3.6" fill="#d04816" transform="rotate(23 1566.4 461.2)"/><ellipse cx="1594.9" cy="480.1" rx="1.5" ry="3.6" fill="#d04816" transform="rotate(-13 1594.9 480.1)"/><ellipse cx="1576.9" cy="445.1" rx="1.5" ry="3.6" fill="#2a2238" transform="rotate(-23 1576.9 445.1)"/><ellipse cx="1577.6" cy="432.6" rx="1.5" ry="3.6" fill="#15131a" transform="rotate(39 1577.6 432.6)"/><ellipse cx="1566.0" cy="409.4" rx="1.5" ry="3.6" fill="#3a2a70" transform="rotate(-7 1566.0 409.4)"/><ellipse cx="1561.3" cy="482.2" rx="1.5" ry="3.6" fill="#33802a" transform="rotate(11 1561.3 482.2)"/><ellipse cx="1582.5" cy="432.7" rx="1.5" ry="3.6" fill="#3a2a70" transform="rotate(28 1582.5 432.7)"/><ellipse cx="1565.5" cy="404.2" rx="1.5" ry="3.6" fill="#33802a" transform="rotate(-12 1565.5 404.2)"/><ellipse cx="1571.2" cy="438.4" rx="1.5" ry="3.6" fill="#d04816" transform="rotate(-1 1571.2 438.4)"/><ellipse cx="1589.6" cy="402.6" rx="1.5" ry="3.6" fill="#a01824" transform="rotate(-9 1589.6 402.6)"/><ellipse cx="1575.5" cy="434.8" rx="1.5" ry="3.6" fill="#3a2a70" transform="rotate(-23 1575.5 434.8)"/><ellipse cx="1546.3" cy="479.1" rx="1.5" ry="3.6" fill="#a01824" transform="rotate(-12 1546.3 479.1)"/><ellipse cx="1546.3" cy="452.1" rx="1.5" ry="3.6" fill="#15131a" transform="rotate(-7 1546.3 452.1)"/><ellipse cx="1592.8" cy="453.1" rx="1.5" ry="3.6" fill="#a01824" transform="rotate(24 1592.8 453.1)"/><ellipse cx="1578.9" cy="479.5" rx="1.5" ry="3.6" fill="#3a2a70" transform="rotate(-25 1578.9 479.5)"/><ellipse cx="1582.3" cy="478.8" rx="1.5" ry="3.6" fill="#3a2a70" transform="rotate(-23 1582.3 478.8)"/><ellipse cx="1555.2" cy="440.9" rx="1.5" ry="3.6" fill="#2a2238" transform="rotate(37 1555.2 440.9)"/><ellipse cx="1563.1" cy="421.6" rx="1.5" ry="3.6" fill="#a01824" transform="rotate(28 1563.1 421.6)"/><ellipse cx="1549.9" cy="442.7" rx="1.5" ry="3.6" fill="#a01824" transform="rotate(27 1549.9 442.7)"/><ellipse cx="1581.4" cy="470.8" rx="1.5" ry="3.6" fill="#d04816" transform="rotate(14 1581.4 470.8)"/><ellipse cx="1560.0" cy="427.5" rx="1.5" ry="3.6" fill="#15131a" transform="rotate(26 1560.0 427.5)"/><ellipse cx="1574.0" cy="444.0" rx="1.5" ry="3.6" fill="#3a2a70" transform="rotate(24 1574.0 444.0)"/><ellipse cx="1555.9" cy="405.6" rx="1.5" ry="3.6" fill="#c8921a" transform="rotate(6 1555.9 405.6)"/><ellipse cx="1571.3" cy="413.8" rx="1.5" ry="3.6" fill="#a01824" transform="rotate(32 1571.3 413.8)"/><ellipse cx="1594.4" cy="422.8" rx="1.5" ry="3.6" fill="#3a2a70" transform="rotate(-11 1594.4 422.8)"/><ellipse cx="1564.9" cy="485.0" rx="1.5" ry="3.6" fill="#2a2238" transform="rotate(-14 1564.9 485.0)"/><ellipse cx="1549.9" cy="439.6" rx="1.5" ry="3.6" fill="#1c5aa0" transform="rotate(24 1549.9 439.6)"/><ellipse cx="1587.0" cy="457.1" rx="1.5" ry="3.6" fill="#33802a" transform="rotate(26 1587.0 457.1)"/><ellipse cx="1558.3" cy="424.0" rx="1.5" ry="3.6" fill="#a01824" transform="rotate(-1 1558.3 424.0)"/><ellipse cx="1581.4" cy="417.1" rx="1.5" ry="3.6" fill="#1c5aa0" transform="rotate(-13 1581.4 417.1)"/><ellipse cx="1555.2" cy="424.2" rx="1.5" ry="3.6" fill="#d0507e" transform="rotate(-4 1555.2 424.2)"/><ellipse cx="1563.6" cy="485.4" rx="1.5" ry="3.6" fill="#1c5aa0" transform="rotate(17 1563.6 485.4)"/><ellipse cx="1548.2" cy="439.9" rx="1.5" ry="3.6" fill="#c8921a" transform="rotate(-18 1548.2 439.9)"/><ellipse cx="1567.7" cy="470.4" rx="1.5" ry="3.6" fill="#2a2238" transform="rotate(34 1567.7 470.4)"/><ellipse cx="1545.1" cy="425.3" rx="1.5" ry="3.6" fill="#33802a" transform="rotate(-22 1545.1 425.3)"/><ellipse cx="1574.2" cy="471.2" rx="1.5" ry="3.6" fill="#d0507e" transform="rotate(35 1574.2 471.2)"/><ellipse cx="1562.4" cy="474.5" rx="1.5" ry="3.6" fill="#2a2238" transform="rotate(14 1562.4 474.5)"/><ellipse cx="1583.3" cy="457.2" rx="1.5" ry="3.6" fill="#a01824" transform="rotate(-18 1583.3 457.2)"/><ellipse cx="1574.0" cy="453.3" rx="1.5" ry="3.6" fill="#d0507e" transform="rotate(-23 1574.0 453.3)"/><ellipse cx="1560.7" cy="403.8" rx="1.5" ry="3.6" fill="#a01824" transform="rotate(-23 1560.7 403.8)"/><ellipse cx="1581.1" cy="478.6" rx="1.5" ry="3.6" fill="#a01824" transform="rotate(28 1581.1 478.6)"/><ellipse cx="1564.3" cy="432.0" rx="1.5" ry="3.6" fill="#3a2a70" transform="rotate(-20 1564.3 432.0)"/><ellipse cx="1544.6" cy="442.6" rx="1.5" ry="3.6" fill="#33802a" transform="rotate(-21 1544.6 442.6)"/><ellipse cx="1548.3" cy="434.0" rx="1.5" ry="3.6" fill="#d04816" transform="rotate(17 1548.3 434.0)"/><ellipse cx="1547.7" cy="414.1" rx="1.5" ry="3.6" fill="#a01824" transform="rotate(2 1547.7 414.1)"/><ellipse cx="1557.7" cy="426.5" rx="1.5" ry="3.6" fill="#c8921a" transform="rotate(-5 1557.7 426.5)"/><ellipse cx="1572.5" cy="430.7" rx="1.5" ry="3.6" fill="#a01824" transform="rotate(-24 1572.5 430.7)"/><ellipse cx="1582.9" cy="469.0" rx="1.5" ry="3.6" fill="#d0507e" transform="rotate(0 1582.9 469.0)"/><ellipse cx="1564.1" cy="481.0" rx="1.5" ry="3.6" fill="#a01824" transform="rotate(34 1564.1 481.0)"/><ellipse cx="1565.0" cy="470.6" rx="1.5" ry="3.6" fill="#3a2a70" transform="rotate(13 1565.0 470.6)"/><ellipse cx="1562.0" cy="466.5" rx="1.5" ry="3.6" fill="#d04816" transform="rotate(-24 1562.0 466.5)"/><ellipse cx="1571.7" cy="455.1" rx="1.5" ry="3.6" fill="#3a2a70" transform="rotate(-19 1571.7 455.1)"/><ellipse cx="1575.4" cy="431.9" rx="1.5" ry="3.6" fill="#15131a" transform="rotate(-16 1575.4 431.9)"/><ellipse cx="1557.7" cy="444.8" rx="1.5" ry="3.6" fill="#3a2a70" transform="rotate(-18 1557.7 444.8)"/><ellipse cx="1568.5" cy="469.2" rx="1.5" ry="3.6" fill="#d0507e" transform="rotate(-5 1568.5 469.2)"/><ellipse cx="1586.5" cy="403.7" rx="1.5" ry="3.6" fill="#33802a" transform="rotate(-5 1586.5 403.7)"/><ellipse cx="1574.6" cy="454.7" rx="1.5" ry="3.6" fill="#3a2a70" transform="rotate(34 1574.6 454.7)"/><ellipse cx="1575.3" cy="470.9" rx="1.5" ry="3.6" fill="#15131a" transform="rotate(17 1575.3 470.9)"/><ellipse cx="1587.5" cy="453.4" rx="1.5" ry="3.6" fill="#d0507e" transform="rotate(29 1587.5 453.4)"/><ellipse cx="1552.5" cy="418.8" rx="1.5" ry="3.6" fill="#3a2a70" transform="rotate(36 1552.5 418.8)"/><ellipse cx="1551.1" cy="430.9" rx="1.5" ry="3.6" fill="#d04816" transform="rotate(-9 1551.1 430.9)"/></g><path d="M1571.6 441.2 L1655.5 469.9" stroke="#e05050" stroke-width="1.2"/><path d="M1432 465.2 L1515 440.3" stroke="#5858f0" stroke-width="1.3"/><path d="M1543.5 489.6 V512" stroke="#48c838" stroke-width="1.7"/><rect x="1478.7" y="448.5" width="4.4" height="4.4" fill="#5050e0"/><rect x="1601.5" y="450.5" width="4" height="4" fill="#d04040"/><rect x="1542" y="490.5" width="3" height="4.5" fill="#48c838"/><path d="M1451.4 494.2 L1463.6 490.4" stroke="#5050e0" stroke-width="1"/><path d="M1451.4 494.2 L1462.7 497.6" stroke="#d04040" stroke-width="1"/><path d="M1451.4 494.2 V508.5" stroke="#48c838" stroke-width="1"/><rect x="1432.5" y="513.5" width="204" height="17" fill="#26272a" stroke="#8a8b8e"/><rect x="1638.5" y="513.5" width="17" height="17" fill="#26272a" stroke="#8a8b8e"/><path d="M1646.7 516.6 L1648.4 521 L1652.8 522.7 L1648.4 524.4 L1646.7 528.8 L1645 524.4 L1640.6 522.7 L1645 521 Z" fill="#f4f4f4"/></svg><div class="t mono" style="left:1435px;top:516px;font-size:13px;color:#dcdcdc">geo1</div><div class="t" style="left:1477px;top:405px;font-size:11.5px;color:#c84040;letter-spacing:.3px;opacity:.85">-1x</div><div class="t" style="left:1588px;top:406px;font-size:11.5px;color:#5050e0;letter-spacing:.3px;opacity:.85">1z</div><div class="t" style="left:1481px;top:438px;font-size:11.5px;color:#5050e0;letter-spacing:.3px;opacity:.85">-1z</div><div class="t" style="left:1610px;top:440px;font-size:11.5px;color:#c84040;letter-spacing:.3px;opacity:.85">1x</div><div class="t" style="left:1545px;top:476px;font-size:11.5px;color:#48c838;letter-spacing:.3px;opacity:.85">1y</div><div class="t" style="left:1464px;top:479px;font-size:11.5px;color:#5050e0;letter-spacing:.3px;opacity:.85">z</div><div class="t" style="left:1463px;top:487px;font-size:11.5px;color:#d04040;letter-spacing:.3px;opacity:.85">x</div><div class="t" style="left:1452px;top:498px;font-size:11.5px;color:#48c838;letter-spacing:.3px;opacity:.85">y</div>
<!-- ===== timeline ===== -->
<div class="a" style="left:302px;top:939px;width:1618px;height:70px;background:#2e2f32"></div>
<div class="a" style="left:302px;top:939px;width:1618px;height:1px;background:#55565a"></div>
<div class="a" style="left:0px;top:1008px;width:1920px;height:1px;background:#66676a"></div>
<div class="a" style="left:302px;top:939px;width:1px;height:69px;background:#6a6a6e"></div>
<div class="a" style="left:303px;top:940px;width:277px;height:68px;background:#0b0a18"></div>
<div class="a" style="left:580px;top:940px;width:1px;height:68px;background:#55565a"></div>
<div class="t" style="left:308px;top:944px;color:#98a2b2;letter-spacing:0.67px">Start:</div>
<div class="t" style="left:369px;top:944px;color:#7a9fe8">1</div>
<div class="t" style="left:438px;top:944px;color:#98a2b2;letter-spacing:0.25px">End:</div>
<div class="t" style="left:498px;top:944px;color:#7a9fe8;letter-spacing:0.65px">600</div>
<div class="t" style="left:308px;top:960px;color:#98a2b2;letter-spacing:0.26px">RStart:</div>
<div class="t" style="left:369px;top:960px;color:#7a9fe8">1</div>
<div class="t" style="left:438px;top:960px;color:#98a2b2;letter-spacing:-0.08px">REnd:</div>
<div class="t" style="left:498px;top:960px;color:#7a9fe8;letter-spacing:0.65px">600</div>
<div class="t" style="left:308px;top:975px;color:#98a2b2;letter-spacing:-0.8px">FPS:</div>
<div class="t" style="left:369px;top:975px;color:#7a9fe8;letter-spacing:0.53px">60.0</div>
<div class="t" style="left:438px;top:975px;color:#98a2b2;letter-spacing:0.39px">Tempo:</div>
<div class="t" style="left:498px;top:975px;color:#7a9fe8;letter-spacing:0.47px">120.0</div>
<div class="t" style="left:308px;top:990px;color:#98a2b2;letter-spacing:0.12px">ResetF:</div>
<div class="t" style="left:369px;top:990px;color:#7a9fe8">1</div>
<div class="t" style="left:438px;top:990px;color:#98a2b2;letter-spacing:-0.08px">T Sig:</div>
<div class="t" style="left:498px;top:990px;color:#7a9fe8">4</div>
<div class="t" style="left:533px;top:990px;color:#7a9fe8">4</div>
<div class="a" style="left:581px;top:940px;width:1337px;height:14px;background:#0e0e10"></div>
<div class="a" style="left:581px;top:953px;width:1337px;height:1px;background:#48494d"></div>
<div class="a" style="left:1918px;top:940px;width:1px;height:24px;background:#55565a"></div>
<div class="t" style="left:582px;top:938px;font-size:11px;letter-spacing:.5px;color:#a8a8ac">1</div>
<div class="a" style="left:692px;top:940px;width:1px;height:13px;background:#6e6f73"></div>
<div class="t" style="left:694px;top:938px;font-size:11px;letter-spacing:.5px;color:#a8a8ac">51</div>
<div class="a" style="left:803px;top:940px;width:1px;height:13px;background:#6e6f73"></div>
<div class="t" style="left:805px;top:938px;font-size:11px;letter-spacing:.5px;color:#a8a8ac">101</div>
<div class="a" style="left:914px;top:940px;width:1px;height:13px;background:#6e6f73"></div>
<div class="t" style="left:916px;top:938px;font-size:11px;letter-spacing:.5px;color:#a8a8ac">151</div>
<div class="a" style="left:1026px;top:940px;width:1px;height:13px;background:#6e6f73"></div>
<div class="t" style="left:1028px;top:938px;font-size:11px;letter-spacing:.5px;color:#a8a8ac">201</div>
<div class="a" style="left:1138px;top:940px;width:1px;height:13px;background:#6e6f73"></div>
<div class="t" style="left:1140px;top:938px;font-size:11px;letter-spacing:.5px;color:#a8a8ac">251</div>
<div class="a" style="left:1249px;top:940px;width:1px;height:13px;background:#6e6f73"></div>
<div class="t" style="left:1251px;top:938px;font-size:11px;letter-spacing:.5px;color:#a8a8ac">301</div>
<div class="a" style="left:1361px;top:940px;width:1px;height:13px;background:#6e6f73"></div>
<div class="t" style="left:1363px;top:938px;font-size:11px;letter-spacing:.5px;color:#a8a8ac">351</div>
<div class="a" style="left:1473px;top:940px;width:1px;height:13px;background:#6e6f73"></div>
<div class="t" style="left:1475px;top:938px;font-size:11px;letter-spacing:.5px;color:#a8a8ac">401</div>
<div class="a" style="left:1585px;top:940px;width:1px;height:13px;background:#6e6f73"></div>
<div class="t" style="left:1587px;top:938px;font-size:11px;letter-spacing:.5px;color:#a8a8ac">451</div>
<div class="a" style="left:1696px;top:940px;width:1px;height:13px;background:#6e6f73"></div>
<div class="t" style="left:1698px;top:938px;font-size:11px;letter-spacing:.5px;color:#a8a8ac">501</div>
<div class="a" style="left:1808px;top:940px;width:1px;height:13px;background:#6e6f73"></div>
<div class="t" style="left:1810px;top:938px;font-size:11px;letter-spacing:.5px;color:#a8a8ac">551</div>
<div class="t" style="left:1895px;top:938px;font-size:11px;letter-spacing:.5px;color:#a8a8ac">600</div>
<div class="a" style="left:1812px;top:941px;width:2px;height:11px;background:#5a74b8"></div>
<div class="a" style="left:581px;top:954px;width:1337px;height:10px;background:#3a4a70;border-top:1px solid #2a2b30;border-bottom:1px solid #55565a"></div>
<div class="a" style="left:582px;top:955px;width:21px;height:8px;background:#4c4d52;border:1px solid #77787c"></div>
<div class="t" style="left:588px;top:949px;font-size:9px;color:#8a8b8f;letter-spacing:1px">...</div>
<div class="a" style="left:1894px;top:955px;width:21px;height:8px;background:#4c4d52;border:1px solid #77787c"></div>
<div class="t" style="left:1900px;top:949px;font-size:9px;color:#8a8b8f;letter-spacing:1px">...</div>
<div class="btn" style="left:584px;top:967px;width:20px;height:20px;color:#77787c;line-height:18px">/</div>
<div class="btn" style="left:584px;top:986px;width:20px;height:19px;color:#77787c;line-height:17px;font-family:'Liberation Serif',serif;font-size:14px">I</div>
<div class="btn org" style="left:607px;top:968px;width:67px;height:17px;line-height:15px;color:#5a1a10;border-color:#3a2a1a;letter-spacing:0">TimeCode</div>
<div class="btn" style="left:607px;top:987px;width:67px;height:18px;line-height:17px">Beats</div>
<div class="a" style="left:677px;top:967px;width:200px;height:39px;background:#000;border:1px solid #3c3d41"></div>
<div class="t" style="left:697px;top:976px;font-size:27px;line-height:27px;height:27px;color:#7fa6ee;letter-spacing:1.71px">00:00:09:11</div>
<div class="a" style="left:879px;top:967px;width:135px;height:39px;background:#000;border:1px solid #3c3d41"></div>
<div class="t" style="left:880px;top:976px;width:134px;text-align:center;font-size:27px;line-height:27px;height:27px;color:#7fa6ee;letter-spacing:.6px">552</div>
<div class="btn" style="left:1017px;top:967px;width:38px;height:39px"></div>
<div class="btn" style="left:1058px;top:967px;width:38px;height:39px"></div>
<div class="btn" style="left:1099px;top:967px;width:38px;height:39px"></div>
<div class="btn org" style="left:1140px;top:967px;width:38px;height:39px"></div>
<div class="btn" style="left:1181px;top:967px;width:38px;height:39px"></div>
<div class="btn" style="left:1222px;top:967px;width:38px;height:39px"></div>
<svg style="left:1017px;top:967px" width="38" height="39"><path d="M13 14.5 V23.5" stroke="#c4c4c6" stroke-width="1.5"/><path d="M19 14.5 V23.5 L14 19 Z M24.5 14.5 V23.5 L19.5 19 Z" fill="#c4c4c6"/></svg>
<svg style="left:1058px;top:967px" width="38" height="39"><path d="M17.5 14 V24 M21 14 V24" stroke="#c4c4c6" stroke-width="1.8"/></svg>
<svg style="left:1099px;top:967px" width="38" height="39"><path d="M21 14.5 V23.5 L16 19 Z" fill="#c4c4c6"/></svg>
<svg style="left:1140px;top:967px" width="38" height="39"><path d="M17 14.5 V23.5 L22 19 Z" fill="#4a1616"/></svg>
<div class="t" style="left:1181px;top:978px;width:38px;text-align:center">-</div>
<svg style="left:1222px;top:967px" width="38" height="39"><path d="M19 14.5 V23.5 M14.5 19 H23.5" stroke="#c4c4c6" stroke-width="1.2"/></svg>
<div class="t" style="left:1265px;top:968px">Range Limit</div>
<div class="btn org" style="left:1264px;top:989px;width:50px;height:17px;line-height:15px;color:#5a1a10;border-color:#3a2a1a">Loop</div>
<div class="btn" style="left:1316px;top:989px;width:45px;height:17px;line-height:15px">Once</div>
<!-- ===== parameter panel ===== -->
<div class="a" style="left:1490px;top:73px;width:430px;height:328px;background:#404040"></div>
<div class="a" style="left:1490px;top:73px;width:430px;height:48px;background:#5a7e3e"></div>
<div class="a" style="left:1534px;top:77px;width:382px;height:20px;background:#789d60"></div>
<div class="t" style="left:1494px;top:80px;font-size:12px;color:#f0f0f0;font-weight:bold;letter-spacing:0.08px">Noise</div>
<div class="t mono" style="left:1537px;top:81px;font-size:12.5px;color:#e8e8e8">noise1</div>
<div class="t" style="left:1495px;top:101px;font-weight:bold;color:#e8e8e8;font-size:17px;line-height:18px;height:18px">?</div>
<svg style="left:1513px;top:100px" width="18" height="18"><rect width="18" height="10" fill="#356fa6"/><path d="M0 10 Q3 8.5 6 10 T12 9.5 T18 9.5 V18 H0Z" fill="#fdd048"/></svg>
<div class="t" style="left:1516.5px;top:99px;font-weight:bold;color:#fff;font-size:19px;line-height:20px;height:20px;text-shadow:1px 0 0 #4a8535,-1px 0 0 #4a8535,0 1px 0 #4a8535,0 -1px 0 #4a8535">?</div>
<div class="a" style="left:1542px;top:102px;width:4px;height:3px;background:#f4f4f4"></div><div class="a" style="left:1542px;top:106px;width:4px;height:10px;background:#f4f4f4"></div>
<svg style="left:1786px;top:99px" width="134" height="20"><path d="M13.7 3.1 L17 7 L9 14.6 L4 16 L4.7 11.4 Z" fill="#8bac76"/><ellipse cx="31.9" cy="9" rx="8.2" ry="4.7" fill="#8bac76"/><path d="M26.5 11.5 L24.2 15.8 L31 13 Z" fill="#8bac76"/><path d="M50.8 5.9 L62.1 8.7 L55.7 17.9 L45.6 14 Z" fill="none" stroke="#fff" stroke-width="1.3"/><path d="M53.5 4.2 L57.5 2 L61.5 6.8 L55 5.6 Z" fill="#fff"/><circle cx="76.3" cy="10.5" r="8.6" fill="#f6f6f6"/><path d="M71.2 11.5 V8.3 Q71.2 5.8 73.5 5.6 V5.2 Q73.8 3.6 76.5 3.6 Q79.6 3.6 79.6 5.6 V8.6 Q79.6 10.3 77.8 10.3 H74.5 Q72.4 10.3 72.4 12.3 V13 Q71.2 12.8 71.2 11.5Z" fill="#3672a8"/><path d="M81.4 9.3 V12.5 Q81.4 15 79.1 15.2 V15.7 Q78.8 17.3 76.1 17.3 Q73 17.3 73 15.3 V12.3 Q73 10.7 74.8 10.7 H78.1 Q80.2 10.7 80.2 8.7 V8 Q81.4 8.2 81.4 9.3Z" fill="#f6c83c"/><path d="M97.9 3.4 V16.8 M91.2 10.1 H104.6" stroke="#fff" stroke-width="2.9"/><circle cx="120" cy="10.3" r="7.4" fill="none" stroke="#fff" stroke-width="1.8"/><circle cx="120" cy="10.3" r="3.9" fill="none" stroke="#fff" stroke-width="1.7"/><circle cx="120" cy="10.3" r="1.3" fill="#fff"/></svg>
<div class="t" style="left:1500px;top:132px;color:#e4e4e4;letter-spacing:-0.28px">Noise</div>
<div class="t" style="left:1545px;top:132px;color:#c8c8c8;letter-spacing:0.04px">Transform</div>
<div class="t" style="left:1617px;top:132px;color:#c8c8c8;letter-spacing:0.09px">Constraints</div>
<div class="t" style="left:1696px;top:132px;color:#c8c8c8;letter-spacing:-0.12px">Channel</div>
<div class="t" style="left:1756px;top:132px;color:#c8c8c8;letter-spacing:0.03px">Common</div>
<div class="a" style="left:1494px;top:151px;width:421px;height:1px;background:#9a9a9a"></div>
<div class="a" style="left:1494px;top:149px;width:44px;height:3px;background:#e8e8e8"></div>
<div class="t" style="left:1440px;width:199.60px;text-align:right;top:160px;color:#d0d0d0;letter-spacing:-0.4px">Type</div>
<div class="a" style="left:1644px;top:158px;width:272px;height:19px;background:#5b5b5b;border:1px solid #4c4c4c;border-top-color:#666"></div>
<div class="t" style="left:1649px;top:160px;color:#cccccc;letter-spacing:0.2px">Hermite</div>
<svg style="left:1901px;top:164px" width="12" height="7"><path d="M1 0.5 H11 L6 6 Z" fill="#c8c8c8"/></svg>
<div class="t" style="left:1440px;width:199.55px;text-align:right;top:182px;color:#d0d0d0;letter-spacing:-0.45px">Seed</div>
<div class="a" style="left:1644px;top:179px;width:50px;height:20px;background:#565656;border-bottom:1px solid #4a4a4a"></div>
<div class="t mono" style="left:1647px;top:182px;color:#e0e0e0">1</div>
<div class="a" style="left:1696px;top:188px;width:220px;height:2px;background:#2b2b2b"></div>
<div class="a" style="left:1719px;top:181px;width:8px;height:15px;background:#686868;border-left:1px solid #747474"></div>
<div class="t" style="left:1440px;width:199.70px;text-align:right;top:204px;color:#d0d0d0;letter-spacing:-0.3px">Period</div>
<div class="a" style="left:1644px;top:201px;width:50px;height:20px;background:#565656;border-bottom:1px solid #4a4a4a"></div>
<div class="t mono" style="left:1647px;top:204px;color:#e0e0e0">1</div>
<div class="a" style="left:1696px;top:210px;width:178px;height:2px;background:#2b2b2b"></div>
<div class="a" style="left:1714px;top:203px;width:8px;height:15px;background:#686868;border-left:1px solid #747474"></div>
<div class="a" style="left:1876px;top:201px;width:40px;height:19px;background:#5b5b5b;border:1px solid #4c4c4c;border-top-color:#666"></div>
<div class="t" style="left:1881px;top:204px;color:#cccccc">S</div>
<svg style="left:1901px;top:208px" width="12" height="7"><path d="M1 0.5 H11 L6 6 Z" fill="#c8c8c8"/></svg>
<div class="t" style="left:1440px;width:200.01px;text-align:right;top:226px;color:#d0d0d0;letter-spacing:0.01px">Harmonics</div>
<div class="a" style="left:1644px;top:223px;width:50px;height:20px;background:#565656;border-bottom:1px solid #4a4a4a"></div>
<div class="t mono" style="left:1647px;top:226px;color:#e0e0e0">1</div>
<div class="a" style="left:1696px;top:232px;width:220px;height:2px;background:#2b2b2b"></div>
<div class="a" style="left:1719px;top:225px;width:8px;height:15px;background:#686868;border-left:1px solid #747474"></div>
<div class="t" style="left:1440px;width:200.10px;text-align:right;top:248px;color:#6c6c6c;letter-spacing:0.1px">Harmonic Spread</div>
<div class="t" style="left:1647.5px;top:248px;color:#6c6c6c">2</div>
<div class="a" style="left:1696px;top:254px;width:220px;height:2px;background:#4a4a4a"></div>
<div class="a" style="left:1718px;top:247px;width:10px;height:15px;background:#4d4d4d;border-left:1px solid #525252"></div>
<div class="t" style="left:1440px;width:199.74px;text-align:right;top:270px;color:#d0d0d0;letter-spacing:-0.26px">Roughness</div>
<div class="a" style="left:1644px;top:267px;width:50px;height:20px;background:#565656;border-bottom:1px solid #4a4a4a"></div>
<div class="t" style="left:1647px;top:270px;color:#e0e0e0;letter-spacing:1.4px">0.25</div>
<div class="a" style="left:1696px;top:276px;width:220px;height:2px;background:#2b2b2b"></div>
<div class="a" style="left:1750px;top:269px;width:8px;height:15px;background:#686868;border-left:1px solid #747474"></div>
<div class="t" style="left:1440px;width:200.09px;text-align:right;top:292px;color:#d0d0d0;letter-spacing:0.09px">Exponent</div>
<div class="a" style="left:1644px;top:289px;width:50px;height:20px;background:#565656;border-bottom:1px solid #4a4a4a"></div>
<div class="t mono" style="left:1647px;top:292px;color:#e0e0e0">1</div>
<div class="a" style="left:1696px;top:298px;width:220px;height:2px;background:#2b2b2b"></div>
<div class="a" style="left:1750px;top:291px;width:8px;height:15px;background:#686868;border-left:1px solid #747474"></div>
<div class="t" style="left:1440px;width:200.31px;text-align:right;top:314px;color:#6c6c6c;letter-spacing:0.31px">Num of Integrals</div>
<div class="t" style="left:1647.5px;top:314px;color:#6c6c6c">2</div>
<div class="a" style="left:1696px;top:320px;width:220px;height:2px;background:#4a4a4a"></div>
<div class="a" style="left:1781px;top:313px;width:10px;height:15px;background:#4d4d4d;border-left:1px solid #525252"></div>
<div class="t" style="left:1440px;width:200.25px;text-align:right;top:336px;color:#d0d0d0;letter-spacing:0.25px">Amplitude</div>
<div class="a" style="left:1644px;top:333px;width:50px;height:20px;background:#565656;border-bottom:1px solid #4a4a4a"></div>
<div class="t mono" style="left:1647px;top:336px;color:#e0e0e0">1</div>
<div class="a" style="left:1696px;top:342px;width:220px;height:2px;background:#2b2b2b"></div>
<div class="a" style="left:1719px;top:335px;width:8px;height:15px;background:#686868;border-left:1px solid #747474"></div>
<div class="t" style="left:1440px;width:200.15px;text-align:right;top:358px;color:#d0d0d0;letter-spacing:0.15px">Offset</div>
<div class="a" style="left:1644px;top:355px;width:50px;height:20px;background:#565656;border-bottom:1px solid #4a4a4a"></div>
<div class="t" style="left:1647.5px;top:358px;color:#e0e0e0">0</div>
<div class="a" style="left:1696px;top:364px;width:220px;height:2px;background:#2b2b2b"></div>
<div class="a" style="left:1698px;top:357px;width:8px;height:15px;background:#686868;border-left:1px solid #747474"></div>
<div class="t" style="left:1440px;width:199.61px;text-align:right;top:380px;color:#6c6c6c;letter-spacing:-0.39px">Reset</div>
<div class="a" style="left:1645px;top:378px;width:25px;height:18px;background:#4a4a4a;border:1px solid #505050"></div>
<div class="t" style="left:1649px;top:380px;color:#5c5c5c">Off</div>
<div class="a" style="left:1696px;top:377px;width:50px;height:20px;background:#4c4c4c"></div>
<div class="t" style="left:1706px;top:380px;color:#6c6c6c;letter-spacing:-0.51px">Pulse</div>
<svg style="left:800px;top:649px" width="14" height="21"><path d="M0.8 1 V16.5 L4.4 13.2 L6.8 18.6 L9.4 17.5 L7 12.2 H11.6 Z" fill="#fff" stroke="#000" stroke-width="1"/></svg>
</div></body></html>
